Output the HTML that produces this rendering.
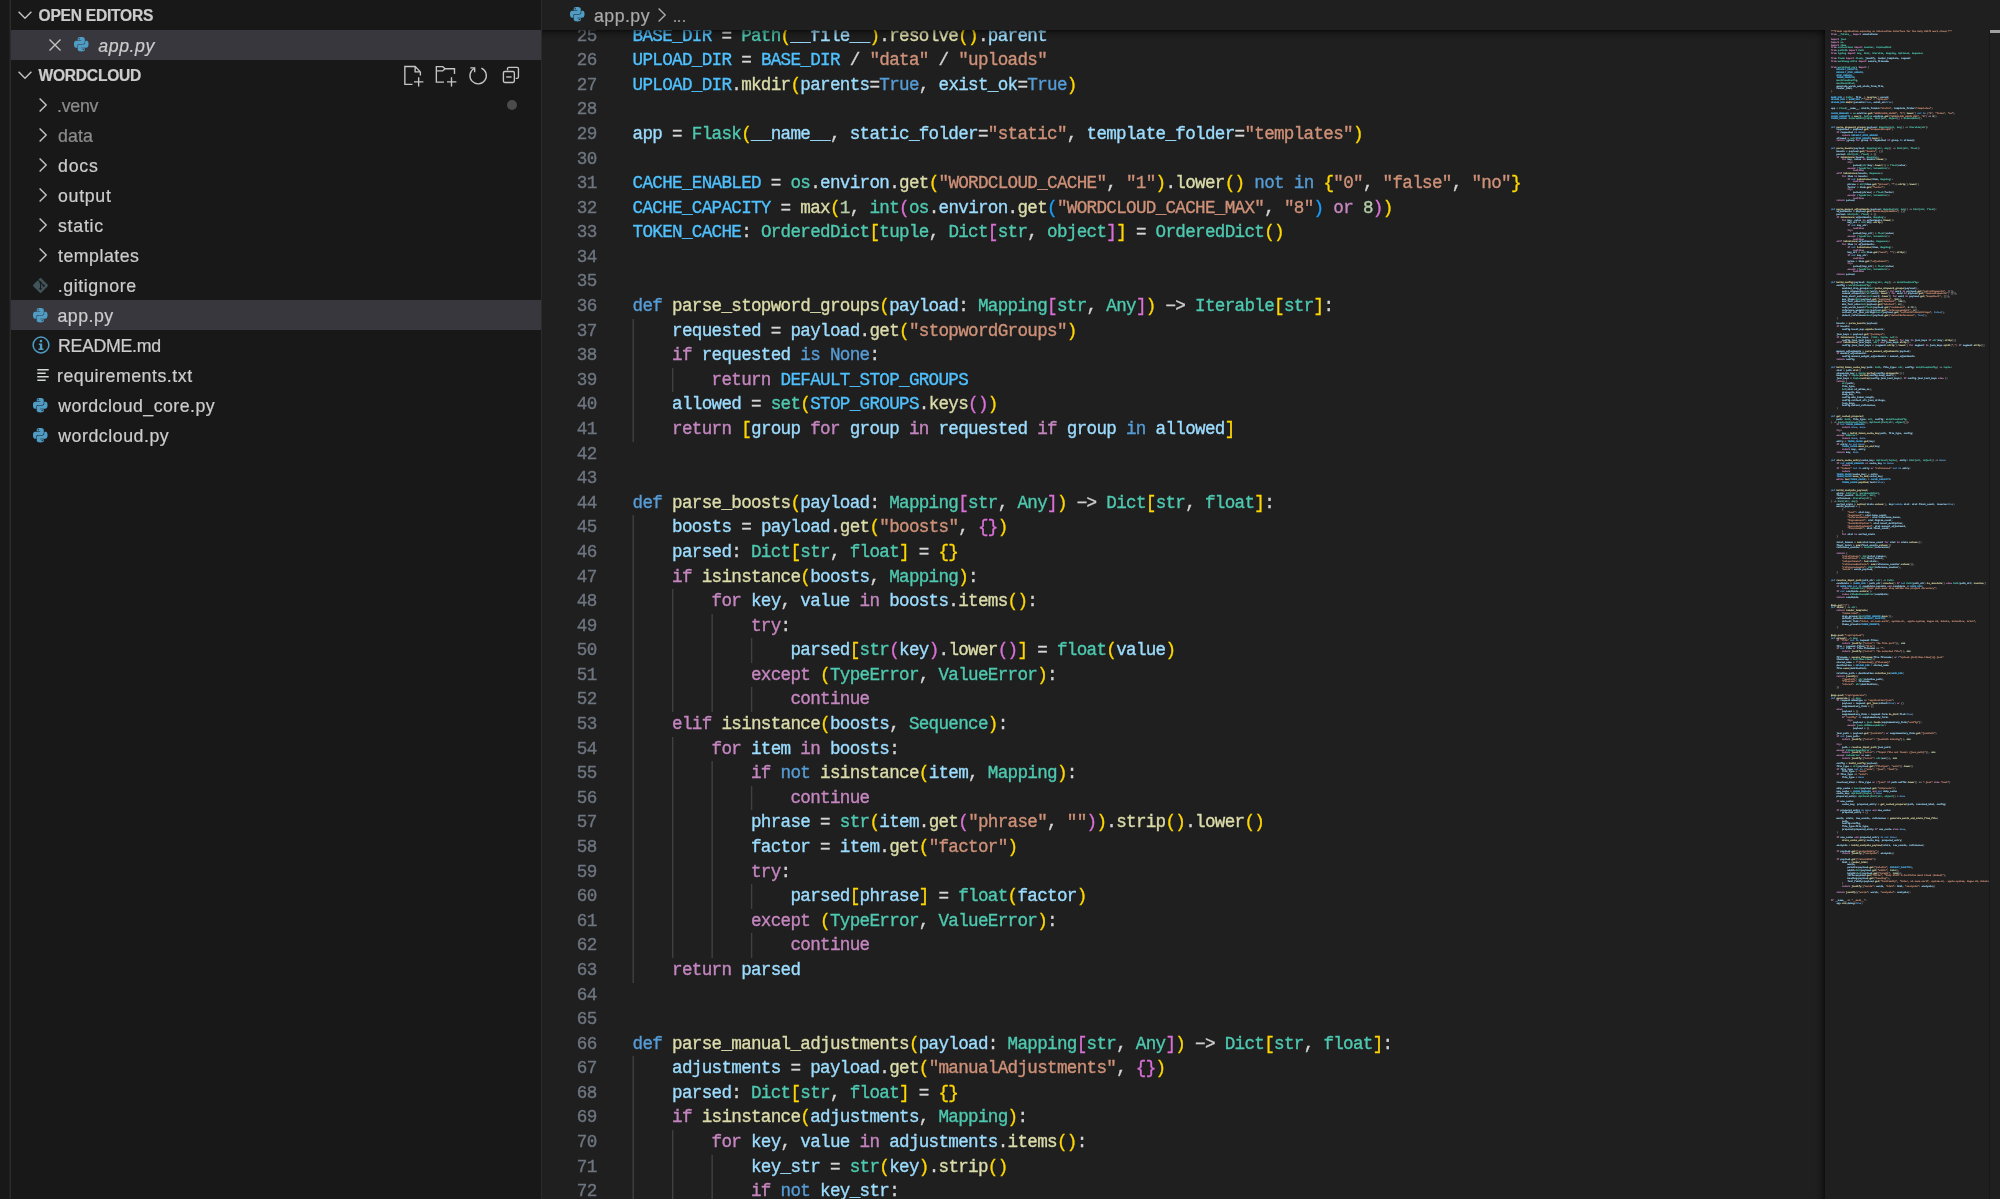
<!DOCTYPE html>
<html><head><meta charset="utf-8">
<style>
*{box-sizing:border-box}
html,body{margin:0;padding:0}
body{width:2000px;height:1199px;overflow:hidden;position:relative;background:#1f1f1f;font-family:"Liberation Sans",sans-serif;color:#cccccc}
i{font-style:normal}
#act{position:absolute;left:0;top:0;width:10px;height:1199px;background:#181818}
#actb{position:absolute;left:9px;top:0;width:2px;height:1199px;background:linear-gradient(to right,#212121 50%,#2b2b2b 50%)}
#side{will-change:transform;position:absolute;left:11px;top:0;width:530px;height:1199px;background:#181818;overflow:hidden}
#sideb{position:absolute;left:541px;top:0;width:1px;height:1199px;background:#2b2b2b}
.row{position:absolute;left:0;width:530px;height:30px;line-height:30px;font-size:17.76px;white-space:nowrap}
.row.sel{background:#37373d}
.row .t{position:absolute;left:46px;top:1px;-webkit-text-stroke:0.22px}
.hdr .t{left:27.5px;top:1px;font-weight:bold;font-size:15.6px;color:#cccccc;letter-spacing:-0.25px}
.dim .t{color:#8c8c8c}
svg{position:absolute;overflow:visible}
#ed{will-change:transform;position:absolute;left:542px;top:0;width:1458px;height:1199px;background:#1f1f1f;overflow:hidden}
#bc{-webkit-text-stroke:0.22px;position:absolute;left:0;top:0;width:1458px;height:30px;background:#1f1f1f;z-index:5;font-size:17.76px;line-height:30px;color:#a9a9a9;white-space:nowrap}
#bcsh{position:absolute;left:0;top:30px;width:1283px;height:10px;z-index:4;box-shadow:#000 0 8.2px 8.2px -8.2px inset}
.ln{position:absolute;left:0;width:1458px;height:24.587px;line-height:24.587px;white-space:pre;font-family:"Liberation Mono",monospace;font-size:17.6px;letter-spacing:-0.691px;color:#d4d4d4;-webkit-text-stroke:0.35px}
.no{position:absolute;left:0;width:54.5px;text-align:right;color:#6e7681;letter-spacing:-0.691px}
.tx{position:absolute;left:90.6px;top:0}
.g{position:absolute;width:1px}
.ctrl{color:#c586c0}.blue{color:#569cd6}.fn{color:#dcdcaa}.var{color:#9cdcfe}.const{color:#4fc1ff}.typ{color:#4ec9b0}.s{color:#ce9178}.n{color:#b5cea8}.p{color:#d4d4d4}.b0{color:#ffd700}.b1{color:#da70d6}.b2{color:#179fff}.cm{color:#6a9955}
#mm{position:absolute;left:1283px;top:30px;width:164px;height:1169px;background:#1f1f1f;z-index:3;overflow:hidden}
#mmsh{position:absolute;left:1273px;top:30px;width:10px;height:1169px;z-index:3;box-shadow:#000 -8.2px 0 8.2px -8.2px inset}
#mmw{position:absolute;left:0;top:0;width:164px;height:1169px}#mmc{opacity:.85;position:absolute;left:5.5px;top:0;transform-origin:0 0;text-rendering:geometricPrecision;transform:scale(0.1391,0.12500);font-family:"Liberation Mono",monospace;font-size:17.6px;letter-spacing:-0.691px;line-height:21.8576px;white-space:pre;color:#d4d4d4;-webkit-text-stroke:1.5px}
#mmc div{position:absolute;left:0;height:21.8576px}#mmc .b0,#mmc .b1,#mmc .b2{color:#8a8a8a}#mmc .p{color:#a0a0a0}
#sb{position:absolute;left:1447px;top:30px;width:11px;height:1169px;border-left:1px solid #17181a;z-index:3;background:#1f1f1f}
#sbm{position:absolute;left:1448px;top:30px;width:10px;height:2.5px;background:#a0a0a0;z-index:4}
</style></head><body>
<div id="act"></div><div id="actb"></div>
<div id="side">
<div class="row hdr" style="top:0"><span class="t">OPEN EDITORS</span></div>
<svg style="left:5.50px;top:10.20px" width="16" height="10" viewBox="-8 -5 16 10"><path d="M-6.4 -3.2L0 3.2L6.4 -3.2" fill="none" stroke="#c5c5c5" stroke-width="1.4"/></svg>
<div class="row sel" style="top:30px"><span class="t" style="left:87.3px;font-style:italic;letter-spacing:0.55px">app.py</span></div>
<svg style="left:36.60px;top:37.80px" width="14" height="14" viewBox="-7 -7 14 14"><path d="M-5.5 -5.5L5.5 5.5M5.5 -5.5L-5.5 5.5" fill="none" stroke="#c5c5c5" stroke-width="1.4"/></svg>
<svg style="left:63.35px;top:37.30px" width="14.50" height="14.40" viewBox="0 0 24 24" preserveAspectRatio="none"><path fill="#4f9cc4" d="M14.25.18l.9.2.73.26.59.3.45.32.34.34.25.34.16.33.1.3.04.26.02.2-.01.13V8.5l-.05.63-.13.55-.21.46-.26.38-.3.31-.33.25-.35.19-.35.14-.33.1-.3.07-.26.04-.21.02H8.77l-.69.05-.59.14-.5.22-.41.27-.33.32-.27.35-.2.36-.15.37-.1.35-.07.32-.04.27-.02.21v3.06H3.17l-.21-.03-.28-.07-.32-.12-.35-.18-.36-.26-.36-.36-.35-.46-.32-.59-.28-.73-.21-.88-.14-1.05-.05-1.23.06-1.22.16-1.04.24-.87.32-.71.36-.57.4-.44.42-.33.42-.24.4-.16.36-.1.32-.05.24-.01h.16l.06.01h8.16v-.83H6.18l-.01-2.75-.02-.37.05-.34.11-.31.17-.28.25-.26.31-.23.38-.2.44-.18.51-.15.58-.12.64-.1.71-.06.77-.04.84-.02 1.27.05zm-6.3 1.98l-.23.33-.08.41.08.41.23.34.33.22.41.09.41-.09.33-.22.23-.34.08-.41-.08-.41-.23-.33-.33-.22-.41-.09-.41.09zm13.09 3.95l.28.06.32.12.35.18.36.27.36.35.35.47.32.59.28.73.21.88.14 1.04.05 1.23-.06 1.23-.16 1.04-.24.86-.32.71-.36.57-.4.45-.42.33-.42.24-.4.16-.36.09-.32.05-.24.02-.16-.01h-8.22v.82h5.84l.01 2.76.02.36-.05.34-.11.31-.17.29-.25.25-.31.24-.38.2-.44.17-.51.15-.58.13-.64.09-.71.07-.77.04-.84.01-1.27-.04-1.07-.14-.9-.2-.73-.25-.59-.3-.45-.33-.34-.34-.25-.34-.16-.33-.1-.3-.04-.25-.02-.2.01-.13v-5.34l.05-.64.13-.54.21-.46.26-.38.3-.32.33-.24.35-.2.35-.14.33-.1.3-.06.26-.04.21-.02.13-.01h5.84l.69-.05.59-.14.5-.21.41-.28.33-.32.27-.35.2-.36.15-.36.1-.35.07-.32.04-.28.02-.21V6.07h2.09l.14.01zm-6.47 14.25l-.23.33-.08.41.08.41.23.33.33.23.41.08.41-.08.33-.23.23-.33.08-.41-.08-.41-.23-.33-.33-.23-.41-.08-.41.08z"/></svg>
<div class="row hdr" style="top:60px"><span class="t">WORDCLOUD</span></div>
<svg style="left:5.50px;top:70.20px" width="16" height="10" viewBox="-8 -5 16 10"><path d="M-6.4 -3.2L0 3.2L6.4 -3.2" fill="none" stroke="#c5c5c5" stroke-width="1.4"/></svg>
<svg style="left:0;top:0" width="530" height="100" viewBox="0 0 530 100"><g fill="none" stroke="#c5c5c5" stroke-width="1.37"><path d="M401.50 84.40 L393.85 84.40 L393.85 66.48 L404.13 66.48 L409.38 71.88 M404.13 66.48 L404.13 71.88 L409.38 71.88 M409.38 71.65 L409.38 75.40 M403.00 81.85 L412.38 81.85 M407.65 77.13 L407.65 86.50"/><path d="M433.00 82.15 L425.35 82.15 L425.35 66.63 L431.73 66.63 L434.13 68.73 L443.50 68.73 L443.50 73.90 M425.35 70.90 L431.73 70.90 L434.13 68.73 M436.00 81.85 L445.38 81.85 M440.50 77.13 L440.50 86.50"/></g></svg>
<svg style="left:456.27px;top:64.47px" width="21.86" height="21.86" viewBox="0 0 16 16"><g fill="none" stroke="#c5c5c5" stroke-width="1"><path d="M5.2 3.3A6 6 0 1 0 10.5 3"/><path d="M2.4 2.8H5.6V6"/></g></svg>
<svg style="left:489.07px;top:64.47px" width="21.86" height="21.86" viewBox="0 0 16 16"><g fill="none" stroke="#c5c5c5" stroke-width="1"><path d="M5.5 4.5V3.5Q5.5 2.5 6.5 2.5H12.5Q13.5 2.5 13.5 3.5V9.5Q13.5 10.5 12.5 10.5H11.5"/><rect x="2.5" y="5.5" width="8" height="8" rx="1"/><path d="M4.5 9.5H8.5"/></g></svg>
<div class="row dim" style="top:90px"><span class="t" style="left:46.00px;letter-spacing:-0.250px">.venv</span></div>
<svg style="left:26.70px;top:97.00px" width="10" height="16" viewBox="-5 -8 10 16"><path d="M-3.4 -6.6L3.2 0L-3.4 6.6" fill="none" stroke="#c5c5c5" stroke-width="1.4"/></svg>
<div class="row dim" style="top:120px"><span class="t" style="left:47.00px;letter-spacing:0.100px">data</span></div>
<svg style="left:26.70px;top:127.00px" width="10" height="16" viewBox="-5 -8 10 16"><path d="M-3.4 -6.6L3.2 0L-3.4 6.6" fill="none" stroke="#c5c5c5" stroke-width="1.4"/></svg>
<div class="row" style="top:150px"><span class="t" style="left:47.00px;letter-spacing:0.770px">docs</span></div>
<svg style="left:26.70px;top:157.00px" width="10" height="16" viewBox="-5 -8 10 16"><path d="M-3.4 -6.6L3.2 0L-3.4 6.6" fill="none" stroke="#c5c5c5" stroke-width="1.4"/></svg>
<div class="row" style="top:180px"><span class="t" style="left:47.00px;letter-spacing:0.700px">output</span></div>
<svg style="left:26.70px;top:187.00px" width="10" height="16" viewBox="-5 -8 10 16"><path d="M-3.4 -6.6L3.2 0L-3.4 6.6" fill="none" stroke="#c5c5c5" stroke-width="1.4"/></svg>
<div class="row" style="top:210px"><span class="t" style="left:47.00px;letter-spacing:0.740px">static</span></div>
<svg style="left:26.70px;top:217.00px" width="10" height="16" viewBox="-5 -8 10 16"><path d="M-3.4 -6.6L3.2 0L-3.4 6.6" fill="none" stroke="#c5c5c5" stroke-width="1.4"/></svg>
<div class="row" style="top:240px"><span class="t" style="left:47.00px;letter-spacing:0.500px">templates</span></div>
<svg style="left:26.70px;top:247.00px" width="10" height="16" viewBox="-5 -8 10 16"><path d="M-3.4 -6.6L3.2 0L-3.4 6.6" fill="none" stroke="#c5c5c5" stroke-width="1.4"/></svg>
<div class="row" style="top:270px"><span class="t" style="left:46.80px;letter-spacing:0.578px">.gitignore</span></div>
<svg style="left:21.90px;top:277.50px" width="15.00" height="15.00" viewBox="0 0 24 24"><path fill="#41535b" d="M23.546 10.93L13.067.452c-.604-.603-1.582-.603-2.188 0L8.708 2.627l2.76 2.76c.645-.215 1.379-.07 1.889.441.516.515.658 1.258.438 1.9l2.658 2.66c.645-.223 1.387-.078 1.9.435.721.72.721 1.884 0 2.604-.719.719-1.881.719-2.6 0-.539-.541-.674-1.337-.404-1.996L12.86 8.955v6.525c.176.086.342.203.488.348.713.721.713 1.883 0 2.6-.719.721-1.889.721-2.609 0-.719-.719-.719-1.879 0-2.598.182-.18.387-.316.605-.406V8.835c-.217-.091-.424-.222-.6-.401-.545-.545-.676-1.342-.396-2.009L7.636 3.7.45 10.881c-.6.605-.6 1.584 0 2.189l10.48 10.477c.604.604 1.582.604 2.186 0l10.43-10.43c.605-.603.605-1.582 0-2.187"/></svg>
<div class="row sel" style="top:300px"><span class="t" style="left:46.40px;letter-spacing:0.500px">app.py</span></div>
<svg style="left:22.35px;top:307.80px" width="14.50" height="14.40" viewBox="0 0 24 24" preserveAspectRatio="none"><path fill="#4f9cc4" d="M14.25.18l.9.2.73.26.59.3.45.32.34.34.25.34.16.33.1.3.04.26.02.2-.01.13V8.5l-.05.63-.13.55-.21.46-.26.38-.3.31-.33.25-.35.19-.35.14-.33.1-.3.07-.26.04-.21.02H8.77l-.69.05-.59.14-.5.22-.41.27-.33.32-.27.35-.2.36-.15.37-.1.35-.07.32-.04.27-.02.21v3.06H3.17l-.21-.03-.28-.07-.32-.12-.35-.18-.36-.26-.36-.36-.35-.46-.32-.59-.28-.73-.21-.88-.14-1.05-.05-1.23.06-1.22.16-1.04.24-.87.32-.71.36-.57.4-.44.42-.33.42-.24.4-.16.36-.1.32-.05.24-.01h.16l.06.01h8.16v-.83H6.18l-.01-2.75-.02-.37.05-.34.11-.31.17-.28.25-.26.31-.23.38-.2.44-.18.51-.15.58-.12.64-.1.71-.06.77-.04.84-.02 1.27.05zm-6.3 1.98l-.23.33-.08.41.08.41.23.34.33.22.41.09.41-.09.33-.22.23-.34.08-.41-.08-.41-.23-.33-.33-.22-.41-.09-.41.09zm13.09 3.95l.28.06.32.12.35.18.36.27.36.35.35.47.32.59.28.73.21.88.14 1.04.05 1.23-.06 1.23-.16 1.04-.24.86-.32.71-.36.57-.4.45-.42.33-.42.24-.4.16-.36.09-.32.05-.24.02-.16-.01h-8.22v.82h5.84l.01 2.76.02.36-.05.34-.11.31-.17.29-.25.25-.31.24-.38.2-.44.17-.51.15-.58.13-.64.09-.71.07-.77.04-.84.01-1.27-.04-1.07-.14-.9-.2-.73-.25-.59-.3-.45-.33-.34-.34-.25-.34-.16-.33-.1-.3-.04-.25-.02-.2.01-.13v-5.34l.05-.64.13-.54.21-.46.26-.38.3-.32.33-.24.35-.2.35-.14.33-.1.3-.06.26-.04.21-.02.13-.01h5.84l.69-.05.59-.14.5-.21.41-.28.33-.32.27-.35.2-.36.15-.36.1-.35.07-.32.04-.28.02-.21V6.07h2.09l.14.01zm-6.47 14.25l-.23.33-.08.41.08.41.23.33.33.23.41.08.41-.08.33-.23.23-.33.08-.41-.08-.41-.23-.33-.33-.23-.41-.08-.41.08z"/></svg>
<div class="row" style="top:330px"><span class="t" style="left:47.00px;letter-spacing:-0.310px">README.md</span></div>
<svg style="left:19.60px;top:335.20px" width="20" height="20" viewBox="-10 -10 20 20"><circle r="7.9" fill="none" stroke="#4f9cc4" stroke-width="1.5"/><circle cx="0" cy="-3.9" r="1.35" fill="#4f9cc4"/><path fill="#4f9cc4" d="M-2.2 -1.6h3.4v5.0h1.3v1.5h-5v-1.5h1.4v-3.5h-1.1z"/></svg>
<div class="row" style="top:360px"><span class="t" style="left:46.00px;letter-spacing:0.520px">requirements.txt</span></div>
<svg style="left:25.20px;top:368.20px" width="14" height="14" viewBox="-7 -7 14 14"><g stroke="#d4d7d6" stroke-width="1.5"><path d="M-5.7 -5.2h11.4M-5.7 -1.7h8.4M-5.7 1.8h11.4M-5.7 5.3h8.4"/></g></svg>
<div class="row" style="top:390px"><span class="t" style="left:47.20px;letter-spacing:0.470px">wordcloud_core.py</span></div>
<svg style="left:22.35px;top:397.80px" width="14.50" height="14.40" viewBox="0 0 24 24" preserveAspectRatio="none"><path fill="#4f9cc4" d="M14.25.18l.9.2.73.26.59.3.45.32.34.34.25.34.16.33.1.3.04.26.02.2-.01.13V8.5l-.05.63-.13.55-.21.46-.26.38-.3.31-.33.25-.35.19-.35.14-.33.1-.3.07-.26.04-.21.02H8.77l-.69.05-.59.14-.5.22-.41.27-.33.32-.27.35-.2.36-.15.37-.1.35-.07.32-.04.27-.02.21v3.06H3.17l-.21-.03-.28-.07-.32-.12-.35-.18-.36-.26-.36-.36-.35-.46-.32-.59-.28-.73-.21-.88-.14-1.05-.05-1.23.06-1.22.16-1.04.24-.87.32-.71.36-.57.4-.44.42-.33.42-.24.4-.16.36-.1.32-.05.24-.01h.16l.06.01h8.16v-.83H6.18l-.01-2.75-.02-.37.05-.34.11-.31.17-.28.25-.26.31-.23.38-.2.44-.18.51-.15.58-.12.64-.1.71-.06.77-.04.84-.02 1.27.05zm-6.3 1.98l-.23.33-.08.41.08.41.23.34.33.22.41.09.41-.09.33-.22.23-.34.08-.41-.08-.41-.23-.33-.33-.22-.41-.09-.41.09zm13.09 3.95l.28.06.32.12.35.18.36.27.36.35.35.47.32.59.28.73.21.88.14 1.04.05 1.23-.06 1.23-.16 1.04-.24.86-.32.71-.36.57-.4.45-.42.33-.42.24-.4.16-.36.09-.32.05-.24.02-.16-.01h-8.22v.82h5.84l.01 2.76.02.36-.05.34-.11.31-.17.29-.25.25-.31.24-.38.2-.44.17-.51.15-.58.13-.64.09-.71.07-.77.04-.84.01-1.27-.04-1.07-.14-.9-.2-.73-.25-.59-.3-.45-.33-.34-.34-.25-.34-.16-.33-.1-.3-.04-.25-.02-.2.01-.13v-5.34l.05-.64.13-.54.21-.46.26-.38.3-.32.33-.24.35-.2.35-.14.33-.1.3-.06.26-.04.21-.02.13-.01h5.84l.69-.05.59-.14.5-.21.41-.28.33-.32.27-.35.2-.36.15-.36.1-.35.07-.32.04-.28.02-.21V6.07h2.09l.14.01zm-6.47 14.25l-.23.33-.08.41.08.41.23.33.33.23.41.08.41-.08.33-.23.23-.33.08-.41-.08-.41-.23-.33-.33-.23-.41-.08-.41.08z"/></svg>
<div class="row" style="top:420px"><span class="t" style="left:47.20px;letter-spacing:0.540px">wordcloud.py</span></div>
<svg style="left:22.35px;top:427.80px" width="14.50" height="14.40" viewBox="0 0 24 24" preserveAspectRatio="none"><path fill="#4f9cc4" d="M14.25.18l.9.2.73.26.59.3.45.32.34.34.25.34.16.33.1.3.04.26.02.2-.01.13V8.5l-.05.63-.13.55-.21.46-.26.38-.3.31-.33.25-.35.19-.35.14-.33.1-.3.07-.26.04-.21.02H8.77l-.69.05-.59.14-.5.22-.41.27-.33.32-.27.35-.2.36-.15.37-.1.35-.07.32-.04.27-.02.21v3.06H3.17l-.21-.03-.28-.07-.32-.12-.35-.18-.36-.26-.36-.36-.35-.46-.32-.59-.28-.73-.21-.88-.14-1.05-.05-1.23.06-1.22.16-1.04.24-.87.32-.71.36-.57.4-.44.42-.33.42-.24.4-.16.36-.1.32-.05.24-.01h.16l.06.01h8.16v-.83H6.18l-.01-2.75-.02-.37.05-.34.11-.31.17-.28.25-.26.31-.23.38-.2.44-.18.51-.15.58-.12.64-.1.71-.06.77-.04.84-.02 1.27.05zm-6.3 1.98l-.23.33-.08.41.08.41.23.34.33.22.41.09.41-.09.33-.22.23-.34.08-.41-.08-.41-.23-.33-.33-.22-.41-.09-.41.09zm13.09 3.95l.28.06.32.12.35.18.36.27.36.35.35.47.32.59.28.73.21.88.14 1.04.05 1.23-.06 1.23-.16 1.04-.24.86-.32.71-.36.57-.4.45-.42.33-.42.24-.4.16-.36.09-.32.05-.24.02-.16-.01h-8.22v.82h5.84l.01 2.76.02.36-.05.34-.11.31-.17.29-.25.25-.31.24-.38.2-.44.17-.51.15-.58.13-.64.09-.71.07-.77.04-.84.01-1.27-.04-1.07-.14-.9-.2-.73-.25-.59-.3-.45-.33-.34-.34-.25-.34-.16-.33-.1-.3-.04-.25-.02-.2.01-.13v-5.34l.05-.64.13-.54.21-.46.26-.38.3-.32.33-.24.35-.2.35-.14.33-.1.3-.06.26-.04.21-.02.13-.01h5.84l.69-.05.59-.14.5-.21.41-.28.33-.32.27-.35.2-.36.15-.36.1-.35.07-.32.04-.28.02-.21V6.07h2.09l.14.01zm-6.47 14.25l-.23.33-.08.41.08.41.23.33.33.23.41.08.41-.08.33-.23.23-.33.08-.41-.08-.41-.23-.33-.33-.23-.41-.08-.41.08z"/></svg>
<div style="position:absolute;left:496.3px;top:100px;width:10px;height:10px;border-radius:5px;background:#4b4b4b"></div>
</div><div id="sideb"></div>
<div id="ed">
<div id="bc"><svg style="left:28.15px;top:7.20px" width="14.50" height="14.40" viewBox="0 0 24 24" preserveAspectRatio="none"><path fill="#4f9cc4" d="M14.25.18l.9.2.73.26.59.3.45.32.34.34.25.34.16.33.1.3.04.26.02.2-.01.13V8.5l-.05.63-.13.55-.21.46-.26.38-.3.31-.33.25-.35.19-.35.14-.33.1-.3.07-.26.04-.21.02H8.77l-.69.05-.59.14-.5.22-.41.27-.33.32-.27.35-.2.36-.15.37-.1.35-.07.32-.04.27-.02.21v3.06H3.17l-.21-.03-.28-.07-.32-.12-.35-.18-.36-.26-.36-.36-.35-.46-.32-.59-.28-.73-.21-.88-.14-1.05-.05-1.23.06-1.22.16-1.04.24-.87.32-.71.36-.57.4-.44.42-.33.42-.24.4-.16.36-.1.32-.05.24-.01h.16l.06.01h8.16v-.83H6.18l-.01-2.75-.02-.37.05-.34.11-.31.17-.28.25-.26.31-.23.38-.2.44-.18.51-.15.58-.12.64-.1.71-.06.77-.04.84-.02 1.27.05zm-6.3 1.98l-.23.33-.08.41.08.41.23.34.33.22.41.09.41-.09.33-.22.23-.34.08-.41-.08-.41-.23-.33-.33-.22-.41-.09-.41.09zm13.09 3.95l.28.06.32.12.35.18.36.27.36.35.35.47.32.59.28.73.21.88.14 1.04.05 1.23-.06 1.23-.16 1.04-.24.86-.32.71-.36.57-.4.45-.42.33-.42.24-.4.16-.36.09-.32.05-.24.02-.16-.01h-8.22v.82h5.84l.01 2.76.02.36-.05.34-.11.31-.17.29-.25.25-.31.24-.38.2-.44.17-.51.15-.58.13-.64.09-.71.07-.77.04-.84.01-1.27-.04-1.07-.14-.9-.2-.73-.25-.59-.3-.45-.33-.34-.34-.25-.34-.16-.33-.1-.3-.04-.25-.02-.2.01-.13v-5.34l.05-.64.13-.54.21-.46.26-.38.3-.32.33-.24.35-.2.35-.14.33-.1.3-.06.26-.04.21-.02.13-.01h5.84l.69-.05.59-.14.5-.21.41-.28.33-.32.27-.35.2-.36.15-.36.1-.35.07-.32.04-.28.02-.21V6.07h2.09l.14.01zm-6.47 14.25l-.23.33-.08.41.08.41.23.33.33.23.41.08.41-.08.33-.23.23-.33.08-.41-.08-.41-.23-.33-.33-.23-.41-.08-.41.08z"/></svg><span style="position:absolute;left:52.0px;top:1px;letter-spacing:0.45px">app.py</span><svg style="left:114.90px;top:7.00px" width="10" height="16" viewBox="-5 -8 10 16"><path d="M-3.4 -6.6L3.2 0L-3.4 6.6" fill="none" stroke="#a9a9a9" stroke-width="1.4"/></svg><b style="position:absolute;left:131.60px;top:19.5px;width:2.4px;height:2.4px;border-radius:1.2px;background:#a9a9a9"></b><b style="position:absolute;left:136.10px;top:19.5px;width:2.4px;height:2.4px;border-radius:1.2px;background:#a9a9a9"></b><b style="position:absolute;left:140.60px;top:19.5px;width:2.4px;height:2.4px;border-radius:1.2px;background:#a9a9a9"></b></div>
<div id="bcsh"></div>
<div class="ln" style="top:23.61px"><span class="no">25</span><span class="tx"><i class="const">BASE_DIR </i><i class="p">= </i><i class="typ">Path</i><i class="b0">(</i><i class="var">__file__</i><i class="b0">)</i><i class="p">.</i><i class="fn">resolve</i><i class="b0">()</i><i class="p">.</i><i class="var">parent</i></span></div>
<div class="ln" style="top:48.20px"><span class="no">26</span><span class="tx"><i class="const">UPLOAD_DIR </i><i class="p">= </i><i class="const">BASE_DIR </i><i class="p">/ </i><i class="s">"data" </i><i class="p">/ </i><i class="s">"uploads"</i></span></div>
<div class="ln" style="top:72.79px"><span class="no">27</span><span class="tx"><i class="const">UPLOAD_DIR</i><i class="p">.</i><i class="fn">mkdir</i><i class="b0">(</i><i class="var">parents</i><i class="p">=</i><i class="blue">True</i><i class="p">, </i><i class="var">exist_ok</i><i class="p">=</i><i class="blue">True</i><i class="b0">)</i></span></div>
<div class="ln" style="top:97.37px"><span class="no">28</span><span class="tx"></span></div>
<div class="ln" style="top:121.96px"><span class="no">29</span><span class="tx"><i class="var">app </i><i class="p">= </i><i class="typ">Flask</i><i class="b0">(</i><i class="var">__name__</i><i class="p">, </i><i class="var">static_folder</i><i class="p">=</i><i class="s">"static"</i><i class="p">, </i><i class="var">template_folder</i><i class="p">=</i><i class="s">"templates"</i><i class="b0">)</i></span></div>
<div class="ln" style="top:146.55px"><span class="no">30</span><span class="tx"></span></div>
<div class="ln" style="top:171.13px"><span class="no">31</span><span class="tx"><i class="const">CACHE_ENABLED </i><i class="p">= </i><i class="typ">os</i><i class="p">.</i><i class="var">environ</i><i class="p">.</i><i class="fn">get</i><i class="b0">(</i><i class="s">"WORDCLOUD_CACHE"</i><i class="p">, </i><i class="s">"1"</i><i class="b0">)</i><i class="p">.</i><i class="fn">lower</i><i class="b0">() </i><i class="blue">not in </i><i class="b0">{</i><i class="s">"0"</i><i class="p">, </i><i class="s">"false"</i><i class="p">, </i><i class="s">"no"</i><i class="b0">}</i></span></div>
<div class="ln" style="top:195.72px"><span class="no">32</span><span class="tx"><i class="const">CACHE_CAPACITY </i><i class="p">= </i><i class="fn">max</i><i class="b0">(</i><i class="n">1</i><i class="p">, </i><i class="typ">int</i><i class="b1">(</i><i class="typ">os</i><i class="p">.</i><i class="var">environ</i><i class="p">.</i><i class="fn">get</i><i class="b2">(</i><i class="s">"WORDCLOUD_CACHE_MAX"</i><i class="p">, </i><i class="s">"8"</i><i class="b2">) </i><i class="ctrl">or </i><i class="n">8</i><i class="b1">)</i><i class="b0">)</i></span></div>
<div class="ln" style="top:220.31px"><span class="no">33</span><span class="tx"><i class="const">TOKEN_CACHE</i><i class="p">: </i><i class="typ">OrderedDict</i><i class="b0">[</i><i class="typ">tuple</i><i class="p">, </i><i class="typ">Dict</i><i class="b1">[</i><i class="typ">str</i><i class="p">, </i><i class="typ">object</i><i class="b1">]</i><i class="b0">] </i><i class="p">= </i><i class="typ">OrderedDict</i><i class="b0">()</i></span></div>
<div class="ln" style="top:244.90px"><span class="no">34</span><span class="tx"></span></div>
<div class="ln" style="top:269.48px"><span class="no">35</span><span class="tx"></span></div>
<div class="ln" style="top:294.07px"><span class="no">36</span><span class="tx"><i class="blue">def </i><i class="fn">parse_stopword_groups</i><i class="b0">(</i><i class="var">payload</i><i class="p">: </i><i class="typ">Mapping</i><i class="b1">[</i><i class="typ">str</i><i class="p">, </i><i class="typ">Any</i><i class="b1">]</i><i class="b0">) </i><i class="p">−&gt; </i><i class="typ">Iterable</i><i class="b0">[</i><i class="typ">str</i><i class="b0">]</i><i class="p">:</i></span></div>
<div class="ln" style="top:318.66px"><span class="no">37</span><span class="tx">    <i class="var">requested </i><i class="p">= </i><i class="var">payload</i><i class="p">.</i><i class="fn">get</i><i class="b0">(</i><i class="s">"stopwordGroups"</i><i class="b0">)</i></span></div>
<div class="ln" style="top:343.24px"><span class="no">38</span><span class="tx">    <i class="ctrl">if </i><i class="var">requested </i><i class="blue">is None</i><i class="p">:</i></span></div>
<div class="ln" style="top:367.83px"><span class="no">39</span><span class="tx">        <i class="ctrl">return </i><i class="const">DEFAULT_STOP_GROUPS</i></span></div>
<div class="ln" style="top:392.42px"><span class="no">40</span><span class="tx">    <i class="var">allowed </i><i class="p">= </i><i class="typ">set</i><i class="b0">(</i><i class="const">STOP_GROUPS</i><i class="p">.</i><i class="fn">keys</i><i class="b1">()</i><i class="b0">)</i></span></div>
<div class="ln" style="top:417.00px"><span class="no">41</span><span class="tx">    <i class="ctrl">return </i><i class="b0">[</i><i class="var">group </i><i class="ctrl">for </i><i class="var">group </i><i class="ctrl">in </i><i class="var">requested </i><i class="ctrl">if </i><i class="var">group </i><i class="blue">in </i><i class="var">allowed</i><i class="b0">]</i></span></div>
<div class="ln" style="top:441.59px"><span class="no">42</span><span class="tx"></span></div>
<div class="ln" style="top:466.18px"><span class="no">43</span><span class="tx"></span></div>
<div class="ln" style="top:490.77px"><span class="no">44</span><span class="tx"><i class="blue">def </i><i class="fn">parse_boosts</i><i class="b0">(</i><i class="var">payload</i><i class="p">: </i><i class="typ">Mapping</i><i class="b1">[</i><i class="typ">str</i><i class="p">, </i><i class="typ">Any</i><i class="b1">]</i><i class="b0">) </i><i class="p">−&gt; </i><i class="typ">Dict</i><i class="b0">[</i><i class="typ">str</i><i class="p">, </i><i class="typ">float</i><i class="b0">]</i><i class="p">:</i></span></div>
<div class="ln" style="top:515.35px"><span class="no">45</span><span class="tx">    <i class="var">boosts </i><i class="p">= </i><i class="var">payload</i><i class="p">.</i><i class="fn">get</i><i class="b0">(</i><i class="s">"boosts"</i><i class="p">, </i><i class="b1">{}</i><i class="b0">)</i></span></div>
<div class="ln" style="top:539.94px"><span class="no">46</span><span class="tx">    <i class="var">parsed</i><i class="p">: </i><i class="typ">Dict</i><i class="b0">[</i><i class="typ">str</i><i class="p">, </i><i class="typ">float</i><i class="b0">] </i><i class="p">= </i><i class="b0">{}</i></span></div>
<div class="ln" style="top:564.53px"><span class="no">47</span><span class="tx">    <i class="ctrl">if </i><i class="fn">isinstance</i><i class="b0">(</i><i class="var">boosts</i><i class="p">, </i><i class="typ">Mapping</i><i class="b0">)</i><i class="p">:</i></span></div>
<div class="ln" style="top:589.11px"><span class="no">48</span><span class="tx">        <i class="ctrl">for </i><i class="var">key</i><i class="p">, </i><i class="var">value </i><i class="ctrl">in </i><i class="var">boosts</i><i class="p">.</i><i class="fn">items</i><i class="b0">()</i><i class="p">:</i></span></div>
<div class="ln" style="top:613.70px"><span class="no">49</span><span class="tx">            <i class="ctrl">try</i><i class="p">:</i></span></div>
<div class="ln" style="top:638.29px"><span class="no">50</span><span class="tx">                <i class="var">parsed</i><i class="b0">[</i><i class="typ">str</i><i class="b1">(</i><i class="var">key</i><i class="b1">)</i><i class="p">.</i><i class="fn">lower</i><i class="b1">()</i><i class="b0">] </i><i class="p">= </i><i class="typ">float</i><i class="b0">(</i><i class="var">value</i><i class="b0">)</i></span></div>
<div class="ln" style="top:662.88px"><span class="no">51</span><span class="tx">            <i class="ctrl">except </i><i class="b0">(</i><i class="typ">TypeError</i><i class="p">, </i><i class="typ">ValueError</i><i class="b0">)</i><i class="p">:</i></span></div>
<div class="ln" style="top:687.46px"><span class="no">52</span><span class="tx">                <i class="ctrl">continue</i></span></div>
<div class="ln" style="top:712.05px"><span class="no">53</span><span class="tx">    <i class="ctrl">elif </i><i class="fn">isinstance</i><i class="b0">(</i><i class="var">boosts</i><i class="p">, </i><i class="typ">Sequence</i><i class="b0">)</i><i class="p">:</i></span></div>
<div class="ln" style="top:736.64px"><span class="no">54</span><span class="tx">        <i class="ctrl">for </i><i class="var">item </i><i class="ctrl">in </i><i class="var">boosts</i><i class="p">:</i></span></div>
<div class="ln" style="top:761.22px"><span class="no">55</span><span class="tx">            <i class="ctrl">if </i><i class="blue">not </i><i class="fn">isinstance</i><i class="b0">(</i><i class="var">item</i><i class="p">, </i><i class="typ">Mapping</i><i class="b0">)</i><i class="p">:</i></span></div>
<div class="ln" style="top:785.81px"><span class="no">56</span><span class="tx">                <i class="ctrl">continue</i></span></div>
<div class="ln" style="top:810.40px"><span class="no">57</span><span class="tx">            <i class="var">phrase </i><i class="p">= </i><i class="typ">str</i><i class="b0">(</i><i class="var">item</i><i class="p">.</i><i class="fn">get</i><i class="b1">(</i><i class="s">"phrase"</i><i class="p">, </i><i class="s">""</i><i class="b1">)</i><i class="b0">)</i><i class="p">.</i><i class="fn">strip</i><i class="b0">()</i><i class="p">.</i><i class="fn">lower</i><i class="b0">()</i></span></div>
<div class="ln" style="top:834.98px"><span class="no">58</span><span class="tx">            <i class="var">factor </i><i class="p">= </i><i class="var">item</i><i class="p">.</i><i class="fn">get</i><i class="b0">(</i><i class="s">"factor"</i><i class="b0">)</i></span></div>
<div class="ln" style="top:859.57px"><span class="no">59</span><span class="tx">            <i class="ctrl">try</i><i class="p">:</i></span></div>
<div class="ln" style="top:884.16px"><span class="no">60</span><span class="tx">                <i class="var">parsed</i><i class="b0">[</i><i class="var">phrase</i><i class="b0">] </i><i class="p">= </i><i class="typ">float</i><i class="b0">(</i><i class="var">factor</i><i class="b0">)</i></span></div>
<div class="ln" style="top:908.75px"><span class="no">61</span><span class="tx">            <i class="ctrl">except </i><i class="b0">(</i><i class="typ">TypeError</i><i class="p">, </i><i class="typ">ValueError</i><i class="b0">)</i><i class="p">:</i></span></div>
<div class="ln" style="top:933.33px"><span class="no">62</span><span class="tx">                <i class="ctrl">continue</i></span></div>
<div class="ln" style="top:957.92px"><span class="no">63</span><span class="tx">    <i class="ctrl">return </i><i class="var">parsed</i></span></div>
<div class="ln" style="top:982.51px"><span class="no">64</span><span class="tx"></span></div>
<div class="ln" style="top:1007.09px"><span class="no">65</span><span class="tx"></span></div>
<div class="ln" style="top:1031.68px"><span class="no">66</span><span class="tx"><i class="blue">def </i><i class="fn">parse_manual_adjustments</i><i class="b0">(</i><i class="var">payload</i><i class="p">: </i><i class="typ">Mapping</i><i class="b1">[</i><i class="typ">str</i><i class="p">, </i><i class="typ">Any</i><i class="b1">]</i><i class="b0">) </i><i class="p">−&gt; </i><i class="typ">Dict</i><i class="b0">[</i><i class="typ">str</i><i class="p">, </i><i class="typ">float</i><i class="b0">]</i><i class="p">:</i></span></div>
<div class="ln" style="top:1056.27px"><span class="no">67</span><span class="tx">    <i class="var">adjustments </i><i class="p">= </i><i class="var">payload</i><i class="p">.</i><i class="fn">get</i><i class="b0">(</i><i class="s">"manualAdjustments"</i><i class="p">, </i><i class="b1">{}</i><i class="b0">)</i></span></div>
<div class="ln" style="top:1080.85px"><span class="no">68</span><span class="tx">    <i class="var">parsed</i><i class="p">: </i><i class="typ">Dict</i><i class="b0">[</i><i class="typ">str</i><i class="p">, </i><i class="typ">float</i><i class="b0">] </i><i class="p">= </i><i class="b0">{}</i></span></div>
<div class="ln" style="top:1105.44px"><span class="no">69</span><span class="tx">    <i class="ctrl">if </i><i class="fn">isinstance</i><i class="b0">(</i><i class="var">adjustments</i><i class="p">, </i><i class="typ">Mapping</i><i class="b0">)</i><i class="p">:</i></span></div>
<div class="ln" style="top:1130.03px"><span class="no">70</span><span class="tx">        <i class="ctrl">for </i><i class="var">key</i><i class="p">, </i><i class="var">value </i><i class="ctrl">in </i><i class="var">adjustments</i><i class="p">.</i><i class="fn">items</i><i class="b0">()</i><i class="p">:</i></span></div>
<div class="ln" style="top:1154.62px"><span class="no">71</span><span class="tx">            <i class="var">key_str </i><i class="p">= </i><i class="typ">str</i><i class="b0">(</i><i class="var">key</i><i class="b0">)</i><i class="p">.</i><i class="fn">strip</i><i class="b0">()</i></span></div>
<div class="ln" style="top:1179.20px"><span class="no">72</span><span class="tx">            <i class="ctrl">if </i><i class="blue">not </i><i class="var">key_str</i><i class="p">:</i></span></div>
<b class="g" style="left:90px;top:319px;height:123px;background:#2f2f2f"></b>
<b class="g" style="left:91px;top:319px;height:123px;background:#3c3c3c"></b>
<b class="g" style="left:90px;top:515px;height:468px;background:#2f2f2f"></b>
<b class="g" style="left:91px;top:515px;height:468px;background:#3c3c3c"></b>
<b class="g" style="left:90px;top:1056px;height:148px;background:#2f2f2f"></b>
<b class="g" style="left:91px;top:1056px;height:148px;background:#3c3c3c"></b>
<b class="g" style="left:130px;top:368px;height:24px;background:#404040"></b>
<b class="g" style="left:131px;top:368px;height:24px;background:#2b2b2b"></b>
<b class="g" style="left:130px;top:589px;height:123px;background:#404040"></b>
<b class="g" style="left:131px;top:589px;height:123px;background:#2b2b2b"></b>
<b class="g" style="left:130px;top:737px;height:221px;background:#404040"></b>
<b class="g" style="left:131px;top:737px;height:221px;background:#2b2b2b"></b>
<b class="g" style="left:130px;top:1130px;height:74px;background:#404040"></b>
<b class="g" style="left:131px;top:1130px;height:74px;background:#2b2b2b"></b>
<b class="g" style="left:169px;top:614px;height:98px;background:#313131"></b>
<b class="g" style="left:170px;top:614px;height:98px;background:#3b3b3b"></b>
<b class="g" style="left:169px;top:761px;height:197px;background:#313131"></b>
<b class="g" style="left:170px;top:761px;height:197px;background:#3b3b3b"></b>
<b class="g" style="left:169px;top:1155px;height:49px;background:#313131"></b>
<b class="g" style="left:170px;top:1155px;height:49px;background:#3b3b3b"></b>
<b class="g" style="left:208px;top:638px;height:25px;background:#212121"></b>
<b class="g" style="left:209px;top:638px;height:25px;background:#404040"></b>
<b class="g" style="left:210px;top:638px;height:25px;background:#292929"></b>
<b class="g" style="left:208px;top:687px;height:25px;background:#212121"></b>
<b class="g" style="left:209px;top:687px;height:25px;background:#404040"></b>
<b class="g" style="left:210px;top:687px;height:25px;background:#292929"></b>
<b class="g" style="left:208px;top:786px;height:24px;background:#212121"></b>
<b class="g" style="left:209px;top:786px;height:24px;background:#404040"></b>
<b class="g" style="left:210px;top:786px;height:24px;background:#292929"></b>
<b class="g" style="left:208px;top:884px;height:25px;background:#212121"></b>
<b class="g" style="left:209px;top:884px;height:25px;background:#404040"></b>
<b class="g" style="left:210px;top:884px;height:25px;background:#292929"></b>
<b class="g" style="left:208px;top:933px;height:25px;background:#212121"></b>
<b class="g" style="left:209px;top:933px;height:25px;background:#404040"></b>
<b class="g" style="left:210px;top:933px;height:25px;background:#292929"></b>
<div id="mmsh"></div>
<div id="mm"><div id="mmw"><div id="mmc"><div style="top:0.000px"><i class="s">"""Flask application exposing an interactive interface for the Katy Shift word cloud."""</i></div><div style="top:24.000px"><i class="ctrl">from </i><i class="typ">__future__ </i><i class="ctrl">import </i><i class="var">annotations</i></div><div style="top:64.000px"><i class="ctrl">import </i><i class="typ">json</i></div><div style="top:88.000px"><i class="ctrl">import </i><i class="typ">os</i></div><div style="top:112.000px"><i class="ctrl">import </i><i class="typ">time</i></div><div style="top:128.000px"><i class="ctrl">from </i><i class="typ">collections </i><i class="ctrl">import </i><i class="typ">Counter</i><i class="p">, </i><i class="typ">OrderedDict</i></div><div style="top:152.000px"><i class="ctrl">from </i><i class="typ">pathlib </i><i class="ctrl">import </i><i class="typ">Path</i></div><div style="top:176.000px"><i class="ctrl">from </i><i class="typ">typing </i><i class="ctrl">import </i><i class="typ">Any</i><i class="p">, </i><i class="typ">Dict</i><i class="p">, </i><i class="typ">Iterable</i><i class="p">, </i><i class="typ">Mapping</i><i class="p">, </i><i class="typ">Optional</i><i class="p">, </i><i class="typ">Sequence</i></div><div style="top:216.000px"><i class="ctrl">from </i><i class="typ">flask </i><i class="ctrl">import </i><i class="typ">Flask</i><i class="p">, </i><i class="var">jsonify</i><i class="p">, </i><i class="var">render_template</i><i class="p">, </i><i class="var">request</i></div><div style="top:240.000px"><i class="ctrl">from </i><i class="typ">werkzeug</i><i class="p">.</i><i class="typ">utils </i><i class="ctrl">import </i><i class="var">secure_filename</i></div><div style="top:288.000px"><i class="ctrl">from </i><i class="typ">wordcloud_core </i><i class="ctrl">import </i><i class="b0">(</i></div><div style="top:304.000px">    <i class="const">DEFAULT_PALETTE</i><i class="p">,</i></div><div style="top:328.000px">    <i class="const">DEFAULT_STOP_GROUPS</i><i class="p">,</i></div><div style="top:352.000px">    <i class="const">STOP_GROUPS</i><i class="p">,</i></div><div style="top:368.000px">    <i class="const">THEME_PRESETS</i><i class="p">,</i></div><div style="top:392.000px">    <i class="typ">WordCloudConfig</i><i class="p">,</i></div><div style="top:416.000px">    <i class="typ">WordCountStat</i><i class="p">,</i></div><div style="top:440.000px">    <i class="var">generate_words_and_stats_from_file</i><i class="p">,</i></div><div style="top:456.000px">    <i class="var">render_html</i><i class="p">,</i></div><div style="top:480.000px"><i class="b0">)</i></div><div style="top:528.000px"><i class="const">BASE_DIR </i><i class="p">= </i><i class="typ">Path</i><i class="b0">(</i><i class="var">__file__</i><i class="b0">)</i><i class="p">.</i><i class="fn">resolve</i><i class="b0">()</i><i class="p">.</i><i class="var">parent</i></div><div style="top:544.000px"><i class="const">UPLOAD_DIR </i><i class="p">= </i><i class="const">BASE_DIR </i><i class="p">/ </i><i class="s">"data" </i><i class="p">/ </i><i class="s">"uploads"</i></div><div style="top:568.000px"><i class="const">UPLOAD_DIR</i><i class="p">.</i><i class="fn">mkdir</i><i class="b0">(</i><i class="var">parents</i><i class="p">=</i><i class="blue">True</i><i class="p">, </i><i class="var">exist_ok</i><i class="p">=</i><i class="blue">True</i><i class="b0">)</i></div><div style="top:616.000px"><i class="var">app </i><i class="p">= </i><i class="typ">Flask</i><i class="b0">(</i><i class="var">__name__</i><i class="p">, </i><i class="var">static_folder</i><i class="p">=</i><i class="s">"static"</i><i class="p">, </i><i class="var">template_folder</i><i class="p">=</i><i class="s">"templates"</i><i class="b0">)</i></div><div style="top:656.000px"><i class="const">CACHE_ENABLED </i><i class="p">= </i><i class="typ">os</i><i class="p">.</i><i class="var">environ</i><i class="p">.</i><i class="fn">get</i><i class="b0">(</i><i class="s">"WORDCLOUD_CACHE"</i><i class="p">, </i><i class="s">"1"</i><i class="b0">)</i><i class="p">.</i><i class="fn">lower</i><i class="b0">() </i><i class="blue">not in </i><i class="b0">{</i><i class="s">"0"</i><i class="p">, </i><i class="s">"false"</i><i class="p">, </i><i class="s">"no"</i><i class="b0">}</i></div><div style="top:680.000px"><i class="const">CACHE_CAPACITY </i><i class="p">= </i><i class="fn">max</i><i class="b0">(</i><i class="n">1</i><i class="p">, </i><i class="typ">int</i><i class="b1">(</i><i class="typ">os</i><i class="p">.</i><i class="var">environ</i><i class="p">.</i><i class="fn">get</i><i class="b2">(</i><i class="s">"WORDCLOUD_CACHE_MAX"</i><i class="p">, </i><i class="s">"8"</i><i class="b2">) </i><i class="ctrl">or </i><i class="n">8</i><i class="b1">)</i><i class="b0">)</i></div><div style="top:696.000px"><i class="const">TOKEN_CACHE</i><i class="p">: </i><i class="typ">OrderedDict</i><i class="b0">[</i><i class="typ">tuple</i><i class="p">, </i><i class="typ">Dict</i><i class="b1">[</i><i class="typ">str</i><i class="p">, </i><i class="typ">object</i><i class="b1">]</i><i class="b0">] </i><i class="p">= </i><i class="typ">OrderedDict</i><i class="b0">()</i></div><div style="top:768.000px"><i class="blue">def </i><i class="fn">parse_stopword_groups</i><i class="b0">(</i><i class="var">payload</i><i class="p">: </i><i class="typ">Mapping</i><i class="b1">[</i><i class="typ">str</i><i class="p">, </i><i class="typ">Any</i><i class="b1">]</i><i class="b0">) </i><i class="p">−&gt; </i><i class="typ">Iterable</i><i class="b0">[</i><i class="typ">str</i><i class="b0">]</i><i class="p">:</i></div><div style="top:784.000px">    <i class="var">requested </i><i class="p">= </i><i class="var">payload</i><i class="p">.</i><i class="fn">get</i><i class="b0">(</i><i class="s">"stopwordGroups"</i><i class="b0">)</i></div><div style="top:808.000px">    <i class="ctrl">if </i><i class="var">requested </i><i class="blue">is None</i><i class="p">:</i></div><div style="top:832.000px">        <i class="ctrl">return </i><i class="const">DEFAULT_STOP_GROUPS</i></div><div style="top:856.000px">    <i class="var">allowed </i><i class="p">= </i><i class="typ">set</i><i class="b0">(</i><i class="const">STOP_GROUPS</i><i class="p">.</i><i class="fn">keys</i><i class="b1">()</i><i class="b0">)</i></div><div style="top:872.000px">    <i class="ctrl">return </i><i class="b0">[</i><i class="var">group </i><i class="ctrl">for </i><i class="var">group </i><i class="ctrl">in </i><i class="var">requested </i><i class="ctrl">if </i><i class="var">group </i><i class="blue">in </i><i class="var">allowed</i><i class="b0">]</i></div><div style="top:936.000px"><i class="blue">def </i><i class="fn">parse_boosts</i><i class="b0">(</i><i class="var">payload</i><i class="p">: </i><i class="typ">Mapping</i><i class="b1">[</i><i class="typ">str</i><i class="p">, </i><i class="typ">Any</i><i class="b1">]</i><i class="b0">) </i><i class="p">−&gt; </i><i class="typ">Dict</i><i class="b0">[</i><i class="typ">str</i><i class="p">, </i><i class="typ">float</i><i class="b0">]</i><i class="p">:</i></div><div style="top:960.000px">    <i class="var">boosts </i><i class="p">= </i><i class="var">payload</i><i class="p">.</i><i class="fn">get</i><i class="b0">(</i><i class="s">"boosts"</i><i class="p">, </i><i class="b1">{}</i><i class="b0">)</i></div><div style="top:984.000px">    <i class="var">parsed</i><i class="p">: </i><i class="typ">Dict</i><i class="b0">[</i><i class="typ">str</i><i class="p">, </i><i class="typ">float</i><i class="b0">] </i><i class="p">= </i><i class="b0">{}</i></div><div style="top:1008.000px">    <i class="ctrl">if </i><i class="fn">isinstance</i><i class="b0">(</i><i class="var">boosts</i><i class="p">, </i><i class="typ">Mapping</i><i class="b0">)</i><i class="p">:</i></div><div style="top:1024.000px">        <i class="ctrl">for </i><i class="var">key</i><i class="p">, </i><i class="var">value </i><i class="ctrl">in </i><i class="var">boosts</i><i class="p">.</i><i class="fn">items</i><i class="b0">()</i><i class="p">:</i></div><div style="top:1048.000px">            <i class="ctrl">try</i><i class="p">:</i></div><div style="top:1072.000px">                <i class="var">parsed</i><i class="b0">[</i><i class="typ">str</i><i class="b1">(</i><i class="var">key</i><i class="b1">)</i><i class="p">.</i><i class="fn">lower</i><i class="b1">()</i><i class="b0">] </i><i class="p">= </i><i class="typ">float</i><i class="b0">(</i><i class="var">value</i><i class="b0">)</i></div><div style="top:1096.000px">            <i class="ctrl">except </i><i class="b0">(</i><i class="typ">TypeError</i><i class="p">, </i><i class="typ">ValueError</i><i class="b0">)</i><i class="p">:</i></div><div style="top:1112.000px">                <i class="ctrl">continue</i></div><div style="top:1136.000px">    <i class="ctrl">elif </i><i class="fn">isinstance</i><i class="b0">(</i><i class="var">boosts</i><i class="p">, </i><i class="typ">Sequence</i><i class="b0">)</i><i class="p">:</i></div><div style="top:1160.000px">        <i class="ctrl">for </i><i class="var">item </i><i class="ctrl">in </i><i class="var">boosts</i><i class="p">:</i></div><div style="top:1184.000px">            <i class="ctrl">if </i><i class="blue">not </i><i class="fn">isinstance</i><i class="b0">(</i><i class="var">item</i><i class="p">, </i><i class="typ">Mapping</i><i class="b0">)</i><i class="p">:</i></div><div style="top:1200.000px">                <i class="ctrl">continue</i></div><div style="top:1224.000px">            <i class="var">phrase </i><i class="p">= </i><i class="typ">str</i><i class="b0">(</i><i class="var">item</i><i class="p">.</i><i class="fn">get</i><i class="b1">(</i><i class="s">"phrase"</i><i class="p">, </i><i class="s">""</i><i class="b1">)</i><i class="b0">)</i><i class="p">.</i><i class="fn">strip</i><i class="b0">()</i><i class="p">.</i><i class="fn">lower</i><i class="b0">()</i></div><div style="top:1248.000px">            <i class="var">factor </i><i class="p">= </i><i class="var">item</i><i class="p">.</i><i class="fn">get</i><i class="b0">(</i><i class="s">"factor"</i><i class="b0">)</i></div><div style="top:1264.000px">            <i class="ctrl">try</i><i class="p">:</i></div><div style="top:1288.000px">                <i class="var">parsed</i><i class="b0">[</i><i class="var">phrase</i><i class="b0">] </i><i class="p">= </i><i class="typ">float</i><i class="b0">(</i><i class="var">factor</i><i class="b0">)</i></div><div style="top:1312.000px">            <i class="ctrl">except </i><i class="b0">(</i><i class="typ">TypeError</i><i class="p">, </i><i class="typ">ValueError</i><i class="b0">)</i><i class="p">:</i></div><div style="top:1336.000px">                <i class="ctrl">continue</i></div><div style="top:1352.000px">    <i class="ctrl">return </i><i class="var">parsed</i></div><div style="top:1424.000px"><i class="blue">def </i><i class="fn">parse_manual_adjustments</i><i class="b0">(</i><i class="var">payload</i><i class="p">: </i><i class="typ">Mapping</i><i class="b1">[</i><i class="typ">str</i><i class="p">, </i><i class="typ">Any</i><i class="b1">]</i><i class="b0">) </i><i class="p">−&gt; </i><i class="typ">Dict</i><i class="b0">[</i><i class="typ">str</i><i class="p">, </i><i class="typ">float</i><i class="b0">]</i><i class="p">:</i></div><div style="top:1440.000px">    <i class="var">adjustments </i><i class="p">= </i><i class="var">payload</i><i class="p">.</i><i class="fn">get</i><i class="b0">(</i><i class="s">"manualAdjustments"</i><i class="p">, </i><i class="b1">{}</i><i class="b0">)</i></div><div style="top:1464.000px">    <i class="var">parsed</i><i class="p">: </i><i class="typ">Dict</i><i class="b0">[</i><i class="typ">str</i><i class="p">, </i><i class="typ">float</i><i class="b0">] </i><i class="p">= </i><i class="b0">{}</i></div><div style="top:1488.000px">    <i class="ctrl">if </i><i class="fn">isinstance</i><i class="b0">(</i><i class="var">adjustments</i><i class="p">, </i><i class="typ">Mapping</i><i class="b0">)</i><i class="p">:</i></div><div style="top:1512.000px">        <i class="ctrl">for </i><i class="var">key</i><i class="p">, </i><i class="var">value </i><i class="ctrl">in </i><i class="var">adjustments</i><i class="p">.</i><i class="fn">items</i><i class="b0">()</i><i class="p">:</i></div><div style="top:1528.000px">            <i class="var">key_str </i><i class="p">= </i><i class="typ">str</i><i class="b0">(</i><i class="var">key</i><i class="b0">)</i><i class="p">.</i><i class="fn">strip</i><i class="b0">()</i></div><div style="top:1552.000px">            <i class="ctrl">if </i><i class="blue">not </i><i class="var">key_str</i><i class="p">:</i></div><div style="top:1576.000px">                <i class="ctrl">continue</i></div><div style="top:1592.000px">            <i class="ctrl">try</i><i class="p">:</i></div><div style="top:1616.000px">                <i class="var">parsed</i><i class="b0">[</i><i class="var">key_str</i><i class="b0">] </i><i class="p">= </i><i class="typ">float</i><i class="b0">(</i><i class="var">value</i><i class="b0">)</i></div><div style="top:1640.000px">            <i class="ctrl">except </i><i class="b0">(</i><i class="typ">TypeError</i><i class="p">, </i><i class="typ">ValueError</i><i class="b0">)</i><i class="p">:</i></div><div style="top:1664.000px">                <i class="ctrl">continue</i></div><div style="top:1680.000px">    <i class="ctrl">elif </i><i class="fn">isinstance</i><i class="b0">(</i><i class="var">adjustments</i><i class="p">, </i><i class="typ">Sequence</i><i class="b0">)</i><i class="p">:</i></div><div style="top:1704.000px">        <i class="ctrl">for </i><i class="var">item </i><i class="ctrl">in </i><i class="var">adjustments</i><i class="p">:</i></div><div style="top:1728.000px">            <i class="ctrl">if </i><i class="blue">not </i><i class="fn">isinstance</i><i class="b0">(</i><i class="var">item</i><i class="p">, </i><i class="typ">Mapping</i><i class="b0">)</i><i class="p">:</i></div><div style="top:1752.000px">                <i class="ctrl">continue</i></div><div style="top:1768.000px">            <i class="var">key_str </i><i class="p">= </i><i class="typ">str</i><i class="b0">(</i><i class="var">item</i><i class="p">.</i><i class="fn">get</i><i class="b1">(</i><i class="s">"word"</i><i class="p">, </i><i class="s">""</i><i class="b1">)</i><i class="b0">)</i><i class="p">.</i><i class="fn">strip</i><i class="b0">()</i></div><div style="top:1792.000px">            <i class="ctrl">if </i><i class="blue">not </i><i class="var">key_str</i><i class="p">:</i></div><div style="top:1816.000px">                <i class="ctrl">continue</i></div><div style="top:1840.000px">            <i class="var">value </i><i class="p">= </i><i class="var">item</i><i class="p">.</i><i class="fn">get</i><i class="b0">(</i><i class="s">"adjustment"</i><i class="b0">)</i></div><div style="top:1856.000px">            <i class="ctrl">try</i><i class="p">:</i></div><div style="top:1880.000px">                <i class="var">parsed</i><i class="b0">[</i><i class="var">key_str</i><i class="b0">] </i><i class="p">= </i><i class="typ">float</i><i class="b0">(</i><i class="var">value</i><i class="b0">)</i></div><div style="top:1904.000px">            <i class="ctrl">except </i><i class="b0">(</i><i class="typ">TypeError</i><i class="p">, </i><i class="typ">ValueError</i><i class="b0">)</i><i class="p">:</i></div><div style="top:1920.000px">                <i class="ctrl">continue</i></div><div style="top:1944.000px">    <i class="ctrl">return </i><i class="var">parsed</i></div><div style="top:2008.000px"><i class="blue">def </i><i class="fn">build_config</i><i class="b0">(</i><i class="var">payload</i><i class="p">: </i><i class="typ">Mapping</i><i class="b1">[</i><i class="typ">str</i><i class="p">, </i><i class="typ">Any</i><i class="b1">]</i><i class="b0">) </i><i class="p">−&gt; </i><i class="typ">WordCloudConfig</i><i class="p">:</i></div><div style="top:2032.000px">    <i class="var">config </i><i class="p">= </i><i class="typ">WordCloudConfig</i><i class="b0">(</i></div><div style="top:2056.000px">        <i class="var">enabled_stop_groups</i><i class="p">=</i><i class="typ">set</i><i class="b1">(</i><i class="fn">parse_stopword_groups</i><i class="b2">(</i><i class="var">payload</i><i class="b2">)</i><i class="b1">)</i><i class="p">,</i></div><div style="top:2080.000px">        <i class="var">extra_stopwords</i><i class="p">=</i><i class="b1">{</i><i class="typ">str</i><i class="b2">(</i><i class="var">word</i><i class="b2">)</i><i class="p">.</i><i class="fn">lower</i><i class="b2">() </i><i class="ctrl">for </i><i class="var">word </i><i class="ctrl">in </i><i class="var">payload</i><i class="p">.</i><i class="fn">get</i><i class="b2">(</i><i class="s">"extraStopwords"</i><i class="p">, </i><i class="b0">[]</i><i class="b2">)</i><i class="b1">}</i><i class="p">,</i></div><div style="top:2096.000px">        <i class="var">remove_stopwords</i><i class="p">=</i><i class="b1">{</i><i class="typ">str</i><i class="b2">(</i><i class="var">word</i><i class="b2">)</i><i class="p">.</i><i class="fn">lower</i><i class="b2">() </i><i class="ctrl">for </i><i class="var">word </i><i class="ctrl">in </i><i class="var">payload</i><i class="p">.</i><i class="fn">get</i><i class="b2">(</i><i class="s">"removeStopwords"</i><i class="p">, </i><i class="b0">[]</i><i class="b2">)</i><i class="b1">}</i><i class="p">,</i></div><div style="top:2120.000px">        <i class="var">keep_short_extras</i><i class="p">=</i><i class="b1">{</i><i class="typ">str</i><i class="b2">(</i><i class="var">word</i><i class="b2">)</i><i class="p">.</i><i class="fn">lower</i><i class="b2">() </i><i class="ctrl">for </i><i class="var">word </i><i class="ctrl">in </i><i class="var">payload</i><i class="p">.</i><i class="fn">get</i><i class="b2">(</i><i class="s">"keepShort"</i><i class="p">, </i><i class="b0">[]</i><i class="b2">)</i><i class="b1">}</i><i class="p">,</i></div><div style="top:2144.000px">        <i class="var">max_items</i><i class="p">=</i><i class="typ">int</i><i class="b1">(</i><i class="var">payload</i><i class="p">.</i><i class="fn">get</i><i class="b2">(</i><i class="s">"maxItems"</i><i class="p">, </i><i class="n">150</i><i class="b2">)</i><i class="b1">)</i><i class="p">,</i></div><div style="top:2160.000px">        <i class="var">max_font_size</i><i class="p">=</i><i class="typ">int</i><i class="b1">(</i><i class="var">payload</i><i class="p">.</i><i class="fn">get</i><i class="b2">(</i><i class="s">"maxFont"</i><i class="p">, </i><i class="n">100</i><i class="b2">)</i><i class="b1">)</i><i class="p">,</i></div><div style="top:2184.000px">        <i class="var">min_font_size</i><i class="p">=</i><i class="typ">int</i><i class="b1">(</i><i class="var">payload</i><i class="p">.</i><i class="fn">get</i><i class="b2">(</i><i class="s">"minFont"</i><i class="p">, </i><i class="n">8</i><i class="b2">)</i><i class="b1">)</i><i class="p">,</i></div><div style="top:2208.000px">        <i class="var">code_words_boost</i><i class="p">=</i><i class="typ">float</i><i class="b1">(</i><i class="var">payload</i><i class="p">.</i><i class="fn">get</i><i class="b2">(</i><i class="s">"codeBoost"</i><i class="p">, </i><i class="n">0.75</i><i class="b2">)</i><i class="b1">)</i><i class="p">,</i></div><div style="top:2232.000px">        <i class="var">reference_weight</i><i class="p">=</i><i class="typ">int</i><i class="b1">(</i><i class="var">payload</i><i class="p">.</i><i class="fn">get</i><i class="b2">(</i><i class="s">"referenceWeight"</i><i class="p">, </i><i class="n">0</i><i class="b2">)</i><i class="b1">)</i><i class="p">,</i></div><div style="top:2248.000px">        <i class="var">collect_all_json_strings</i><i class="p">=</i><i class="typ">bool</i><i class="b1">(</i><i class="var">payload</i><i class="p">.</i><i class="fn">get</i><i class="b2">(</i><i class="s">"collectAllJsonStrings"</i><i class="p">, </i><i class="blue">False</i><i class="b2">)</i><i class="b1">)</i><i class="p">,</i></div><div style="top:2272.000px">        <i class="var">detect_references</i><i class="p">=</i><i class="typ">bool</i><i class="b1">(</i><i class="var">payload</i><i class="p">.</i><i class="fn">get</i><i class="b2">(</i><i class="s">"detectReferences"</i><i class="p">, </i><i class="blue">True</i><i class="b2">)</i><i class="b1">)</i><i class="p">,</i></div><div style="top:2296.000px">    <i class="b0">)</i></div><div style="top:2336.000px">    <i class="var">boosts </i><i class="p">= </i><i class="fn">parse_boosts</i><i class="b0">(</i><i class="var">payload</i><i class="b0">)</i></div><div style="top:2360.000px">    <i class="ctrl">if </i><i class="var">boosts</i><i class="p">:</i></div><div style="top:2384.000px">        <i class="var">config</i><i class="p">.</i><i class="var">boost_map</i><i class="p">.</i><i class="fn">update</i><i class="b0">(</i><i class="var">boosts</i><i class="b0">)</i></div><div style="top:2424.000px">    <i class="var">json_keys </i><i class="p">= </i><i class="var">payload</i><i class="p">.</i><i class="fn">get</i><i class="b0">(</i><i class="s">"jsonKeys"</i><i class="b0">)</i></div><div style="top:2448.000px">    <i class="ctrl">if </i><i class="fn">isinstance</i><i class="b0">(</i><i class="var">json_keys</i><i class="p">, </i><i class="b1">(</i><i class="typ">list</i><i class="p">, </i><i class="typ">tuple</i><i class="p">, </i><i class="typ">set</i><i class="b1">)</i><i class="b0">)</i><i class="p">:</i></div><div style="top:2472.000px">        <i class="var">config</i><i class="p">.</i><i class="var">json_text_keys </i><i class="p">= </i><i class="b0">[</i><i class="typ">str</i><i class="b1">(</i><i class="var">key</i><i class="b1">)</i><i class="p">.</i><i class="fn">lower</i><i class="b1">() </i><i class="ctrl">for </i><i class="var">key </i><i class="ctrl">in </i><i class="var">json_keys </i><i class="ctrl">if </i><i class="typ">str</i><i class="b1">(</i><i class="var">key</i><i class="b1">)</i><i class="p">.</i><i class="fn">strip</i><i class="b1">()</i><i class="b0">]</i></div><div style="top:2488.000px">    <i class="ctrl">elif </i><i class="fn">isinstance</i><i class="b0">(</i><i class="var">json_keys</i><i class="p">, </i><i class="typ">str</i><i class="b0">) </i><i class="ctrl">and </i><i class="var">json_keys</i><i class="p">.</i><i class="fn">strip</i><i class="b0">()</i><i class="p">:</i></div><div style="top:2512.000px">        <i class="var">config</i><i class="p">.</i><i class="var">json_text_keys </i><i class="p">= </i><i class="b0">[</i><i class="var">segment</i><i class="p">.</i><i class="fn">strip</i><i class="b1">()</i><i class="p">.</i><i class="fn">lower</i><i class="b1">() </i><i class="ctrl">for </i><i class="var">segment </i><i class="ctrl">in </i><i class="var">json_keys</i><i class="p">.</i><i class="fn">split</i><i class="b1">(</i><i class="s">","</i><i class="b1">) </i><i class="ctrl">if </i><i class="var">segment</i><i class="p">.</i><i class="fn">strip</i><i class="b1">()</i><i class="b0">]</i></div><div style="top:2560.000px">    <i class="var">manual_adjustments </i><i class="p">= </i><i class="fn">parse_manual_adjustments</i><i class="b0">(</i><i class="var">payload</i><i class="b0">)</i></div><div style="top:2576.000px">    <i class="ctrl">if </i><i class="var">manual_adjustments</i><i class="p">:</i></div><div style="top:2600.000px">        <i class="var">config</i><i class="p">.</i><i class="var">manual_weight_adjustments </i><i class="p">= </i><i class="var">manual_adjustments</i></div><div style="top:2624.000px">    <i class="ctrl">return </i><i class="var">config</i></div><div style="top:2688.000px"><i class="blue">def </i><i class="fn">build_token_cache_key</i><i class="b0">(</i><i class="var">path</i><i class="p">: </i><i class="typ">Path</i><i class="p">, </i><i class="var">file_type</i><i class="p">: </i><i class="typ">str</i><i class="p">, </i><i class="var">config</i><i class="p">: </i><i class="typ">WordCloudConfig</i><i class="b0">) </i><i class="p">−&gt; </i><i class="typ">tuple</i><i class="p">:</i></div><div style="top:2712.000px">    <i class="var">stat </i><i class="p">= </i><i class="var">path</i><i class="p">.</i><i class="fn">stat</i><i class="b0">()</i></div><div style="top:2736.000px">    <i class="var">stopwords_key </i><i class="p">= </i><i class="typ">tuple</i><i class="b0">(</i><i class="fn">sorted</i><i class="b1">(</i><i class="var">config</i><i class="p">.</i><i class="fn">stopwords</i><i class="b2">()</i><i class="b1">)</i><i class="b0">)</i></div><div style="top:2752.000px">    <i class="var">keep_key </i><i class="p">= </i><i class="typ">tuple</i><i class="b0">(</i><i class="fn">sorted</i><i class="b1">(</i><i class="var">config</i><i class="p">.</i><i class="var">keep_short</i><i class="b1">)</i><i class="b0">)</i></div><div style="top:2776.000px">    <i class="var">json_keys </i><i class="p">= </i><i class="typ">tuple</i><i class="b0">(</i><i class="fn">sorted</i><i class="b1">(</i><i class="var">config</i><i class="p">.</i><i class="var">json_text_keys</i><i class="b1">)</i><i class="b0">) </i><i class="ctrl">if </i><i class="var">config</i><i class="p">.</i><i class="var">json_text_keys </i><i class="ctrl">else </i><i class="b0">()</i></div><div style="top:2800.000px">    <i class="ctrl">return </i><i class="b0">(</i></div><div style="top:2816.000px">        <i class="typ">str</i><i class="b1">(</i><i class="var">path</i><i class="b1">)</i><i class="p">,</i></div><div style="top:2840.000px">        <i class="var">file_type</i><i class="p">,</i></div><div style="top:2864.000px">        <i class="typ">int</i><i class="b1">(</i><i class="var">stat</i><i class="p">.</i><i class="var">st_mtime_ns</i><i class="b1">)</i><i class="p">,</i></div><div style="top:2888.000px">        <i class="var">stopwords_key</i><i class="p">,</i></div><div style="top:2904.000px">        <i class="var">keep_key</i><i class="p">,</i></div><div style="top:2928.000px">        <i class="var">config</i><i class="p">.</i><i class="var">min_token_length</i><i class="p">,</i></div><div style="top:2952.000px">        <i class="var">config</i><i class="p">.</i><i class="var">collect_all_json_strings</i><i class="p">,</i></div><div style="top:2976.000px">        <i class="var">json_keys</i><i class="p">,</i></div><div style="top:2992.000px">        <i class="var">config</i><i class="p">.</i><i class="var">detect_references</i><i class="p">,</i></div><div style="top:3016.000px">    <i class="b0">)</i></div><div style="top:3080.000px"><i class="blue">def </i><i class="fn">get_cached_prepared</i><i class="b0">(</i></div><div style="top:3104.000px">    <i class="var">path</i><i class="p">: </i><i class="typ">Path</i><i class="p">, </i><i class="var">file_type</i><i class="p">: </i><i class="typ">str</i><i class="p">, </i><i class="var">config</i><i class="p">: </i><i class="typ">WordCloudConfig</i></div><div style="top:3128.000px"><i class="b0">) </i><i class="p">−&gt; </i><i class="typ">tuple</i><i class="b0">[</i><i class="typ">Optional</i><i class="b1">[</i><i class="typ">tuple</i><i class="b1">]</i><i class="p">, </i><i class="typ">Optional</i><i class="b1">[</i><i class="typ">Dict</i><i class="b2">[</i><i class="typ">str</i><i class="p">, </i><i class="typ">object</i><i class="b2">]</i><i class="b1">]</i><i class="b0">]</i><i class="p">:</i></div><div style="top:3144.000px">    <i class="ctrl">if </i><i class="blue">not </i><i class="const">CACHE_ENABLED</i><i class="p">:</i></div><div style="top:3168.000px">        <i class="ctrl">return </i><i class="blue">None</i><i class="p">, </i><i class="blue">None</i></div><div style="top:3192.000px">    <i class="ctrl">try</i><i class="p">:</i></div><div style="top:3216.000px">        <i class="var">key </i><i class="p">= </i><i class="fn">build_token_cache_key</i><i class="b0">(</i><i class="var">path</i><i class="p">, </i><i class="var">file_type</i><i class="p">, </i><i class="var">config</i><i class="b0">)</i></div><div style="top:3232.000px">    <i class="ctrl">except </i><i class="typ">OSError</i><i class="p">:</i></div><div style="top:3256.000px">        <i class="ctrl">return </i><i class="blue">None</i><i class="p">, </i><i class="blue">None</i></div><div style="top:3280.000px">    <i class="var">entry </i><i class="p">= </i><i class="const">TOKEN_CACHE</i><i class="p">.</i><i class="fn">get</i><i class="b0">(</i><i class="var">key</i><i class="b0">)</i></div><div style="top:3304.000px">    <i class="ctrl">if </i><i class="var">entry </i><i class="blue">is not None</i><i class="p">:</i></div><div style="top:3320.000px">        <i class="const">TOKEN_CACHE</i><i class="p">.</i><i class="fn">move_to_end</i><i class="b0">(</i><i class="var">key</i><i class="b0">)</i></div><div style="top:3344.000px">        <i class="ctrl">return </i><i class="var">key</i><i class="p">, </i><i class="var">entry</i></div><div style="top:3368.000px">    <i class="ctrl">return </i><i class="var">key</i><i class="p">, </i><i class="blue">None</i></div><div style="top:3432.000px"><i class="blue">def </i><i class="fn">store_cache_entry</i><i class="b0">(</i><i class="var">cache_key</i><i class="p">: </i><i class="typ">Optional</i><i class="b1">[</i><i class="typ">tuple</i><i class="b1">]</i><i class="p">, </i><i class="var">entry</i><i class="p">: </i><i class="typ">Dict</i><i class="b1">[</i><i class="typ">str</i><i class="p">, </i><i class="typ">object</i><i class="b1">]</i><i class="b0">) </i><i class="p">−&gt; </i><i class="blue">None</i><i class="p">:</i></div><div style="top:3456.000px">    <i class="ctrl">if </i><i class="blue">not </i><i class="const">CACHE_ENABLED </i><i class="ctrl">or </i><i class="var">cache_key </i><i class="blue">is None</i><i class="p">:</i></div><div style="top:3472.000px">        <i class="ctrl">return</i></div><div style="top:3496.000px">    <i class="ctrl">if </i><i class="s">"tokens" </i><i class="blue">not in </i><i class="var">entry </i><i class="ctrl">or </i><i class="s">"references" </i><i class="blue">not in </i><i class="var">entry</i><i class="p">:</i></div><div style="top:3520.000px">        <i class="ctrl">return</i></div><div style="top:3544.000px">    <i class="const">TOKEN_CACHE</i><i class="b0">[</i><i class="var">cache_key</i><i class="b0">] </i><i class="p">= </i><i class="var">entry</i></div><div style="top:3560.000px">    <i class="const">TOKEN_CACHE</i><i class="p">.</i><i class="fn">move_to_end</i><i class="b0">(</i><i class="var">cache_key</i><i class="b0">)</i></div><div style="top:3584.000px">    <i class="ctrl">while </i><i class="fn">len</i><i class="b0">(</i><i class="const">TOKEN_CACHE</i><i class="b0">) </i><i class="p">&gt; </i><i class="const">CACHE_CAPACITY</i><i class="p">:</i></div><div style="top:3608.000px">        <i class="const">TOKEN_CACHE</i><i class="p">.</i><i class="fn">popitem</i><i class="b0">(</i><i class="var">last</i><i class="p">=</i><i class="blue">False</i><i class="b0">)</i></div><div style="top:3672.000px"><i class="blue">def </i><i class="fn">build_analysis_payload</i><i class="b0">(</i></div><div style="top:3696.000px">    <i class="var">stats</i><i class="p">: </i><i class="typ">Dict</i><i class="b1">[</i><i class="typ">str</i><i class="p">, </i><i class="typ">WordCountStat</i><i class="b1">]</i><i class="p">,</i></div><div style="top:3712.000px">    <i class="var">final_counts</i><i class="p">: </i><i class="typ">Dict</i><i class="b1">[</i><i class="typ">str</i><i class="p">, </i><i class="typ">int</i><i class="b1">]</i><i class="p">,</i></div><div style="top:3736.000px">    <i class="var">references</i><i class="p">: </i><i class="typ">Iterable</i><i class="b1">[</i><i class="typ">str</i><i class="b1">]</i><i class="p">,</i></div><div style="top:3760.000px"><i class="b0">) </i><i class="p">−&gt; </i><i class="typ">Dict</i><i class="b0">[</i><i class="typ">str</i><i class="p">, </i><i class="typ">Any</i><i class="b0">]</i><i class="p">:</i></div><div style="top:3784.000px">    <i class="var">sorted_stats </i><i class="p">= </i><i class="fn">sorted</i><i class="b0">(</i><i class="var">stats</i><i class="p">.</i><i class="fn">values</i><i class="b1">()</i><i class="p">, </i><i class="var">key</i><i class="p">=</i><i class="blue">lambda </i><i class="var">stat</i><i class="p">: </i><i class="var">stat</i><i class="p">.</i><i class="var">final_count</i><i class="p">, </i><i class="var">reverse</i><i class="p">=</i><i class="blue">True</i><i class="b0">)</i></div><div style="top:3800.000px">    <i class="var">words_payload </i><i class="p">= </i><i class="b0">[</i></div><div style="top:3824.000px">        <i class="b1">{</i></div><div style="top:3848.000px">            <i class="s">"text"</i><i class="p">: </i><i class="var">stat</i><i class="p">.</i><i class="var">key</i><i class="p">,</i></div><div style="top:3872.000px">            <i class="s">"baseCount"</i><i class="p">: </i><i class="var">stat</i><i class="p">.</i><i class="var">base_count</i><i class="p">,</i></div><div style="top:3888.000px">            <i class="s">"referenceBonus"</i><i class="p">: </i><i class="var">stat</i><i class="p">.</i><i class="var">reference_bonus</i><i class="p">,</i></div><div style="top:3912.000px">            <i class="s">"bigramCount"</i><i class="p">: </i><i class="var">stat</i><i class="p">.</i><i class="var">bigram_count</i><i class="p">,</i></div><div style="top:3936.000px">            <i class="s">"boostMultiplier"</i><i class="p">: </i><i class="var">stat</i><i class="p">.</i><i class="var">boost_multiplier</i><i class="p">,</i></div><div style="top:3960.000px">            <i class="s">"manualAdjustment"</i><i class="p">: </i><i class="var">stat</i><i class="p">.</i><i class="var">manual_adjustment</i><i class="p">,</i></div><div style="top:3976.000px">            <i class="s">"finalCount"</i><i class="p">: </i><i class="var">stat</i><i class="p">.</i><i class="var">final_count</i><i class="p">,</i></div><div style="top:4000.000px">        <i class="b1">}</i></div><div style="top:4024.000px">        <i class="ctrl">for </i><i class="var">stat </i><i class="ctrl">in </i><i class="var">sorted_stats</i></div><div style="top:4040.000px">    <i class="b0">]</i></div><div style="top:4088.000px">    <i class="var">total_tokens </i><i class="p">= </i><i class="fn">sum</i><i class="b0">(</i><i class="var">stat</i><i class="p">.</i><i class="var">base_count </i><i class="ctrl">for </i><i class="var">stat </i><i class="ctrl">in </i><i class="var">stats</i><i class="p">.</i><i class="fn">values</i><i class="b1">()</i><i class="b0">)</i></div><div style="top:4112.000px">    <i class="var">final_total </i><i class="p">= </i><i class="fn">sum</i><i class="b0">(</i><i class="var">final_counts</i><i class="p">.</i><i class="fn">values</i><i class="b1">()</i><i class="b0">)</i></div><div style="top:4128.000px">    <i class="var">reference_counter </i><i class="p">= </i><i class="typ">Counter</i><i class="b0">(</i><i class="var">references</i><i class="b0">)</i></div><div style="top:4176.000px">    <i class="ctrl">return </i><i class="b0">{</i></div><div style="top:4200.000px">        <i class="s">"totalTokens"</i><i class="p">: </i><i class="typ">int</i><i class="b1">(</i><i class="var">total_tokens</i><i class="b1">)</i><i class="p">,</i></div><div style="top:4216.000px">        <i class="s">"totalFinal"</i><i class="p">: </i><i class="typ">int</i><i class="b1">(</i><i class="var">final_total</i><i class="b1">)</i><i class="p">,</i></div><div style="top:4240.000px">        <i class="s">"uniqueTokens"</i><i class="p">: </i><i class="fn">len</i><i class="b1">(</i><i class="var">stats</i><i class="b1">)</i><i class="p">,</i></div><div style="top:4264.000px">        <i class="s">"referenceMentions"</i><i class="p">: </i><i class="fn">sum</i><i class="b1">(</i><i class="var">reference_counter</i><i class="p">.</i><i class="fn">values</i><i class="b2">()</i><i class="b1">)</i><i class="p">,</i></div><div style="top:4288.000px">        <i class="s">"referenceCounts"</i><i class="p">: </i><i class="typ">dict</i><i class="b1">(</i><i class="var">reference_counter</i><i class="b1">)</i><i class="p">,</i></div><div style="top:4304.000px">        <i class="s">"words"</i><i class="p">: </i><i class="var">words_payload</i><i class="p">,</i></div><div style="top:4328.000px">    <i class="b0">}</i></div><div style="top:4392.000px"><i class="blue">def </i><i class="fn">resolve_input_path</i><i class="b0">(</i><i class="var">path_str</i><i class="p">: </i><i class="typ">str</i><i class="b0">) </i><i class="p">−&gt; </i><i class="typ">Path</i><i class="p">:</i></div><div style="top:4416.000px">    <i class="var">candidate </i><i class="p">= </i><i class="b0">(</i><i class="const">BASE_DIR </i><i class="p">/ </i><i class="var">path_str</i><i class="b0">)</i><i class="p">.</i><i class="fn">resolve</i><i class="b0">() </i><i class="ctrl">if </i><i class="blue">not </i><i class="typ">Path</i><i class="b0">(</i><i class="var">path_str</i><i class="b0">)</i><i class="p">.</i><i class="fn">is_absolute</i><i class="b0">() </i><i class="ctrl">else </i><i class="typ">Path</i><i class="b0">(</i><i class="var">path_str</i><i class="b0">)</i><i class="p">.</i><i class="fn">resolve</i><i class="b0">()</i></div><div style="top:4440.000px">    <i class="ctrl">if </i><i class="const">BASE_DIR </i><i class="blue">not in </i><i class="var">candidate</i><i class="p">.</i><i class="var">parents </i><i class="ctrl">and </i><i class="var">candidate </i><i class="p">!= </i><i class="const">BASE_DIR</i><i class="p">:</i></div><div style="top:4456.000px">        <i class="ctrl">raise </i><i class="typ">ValueError</i><i class="b0">(</i><i class="s">"Input path must stay within the project directory"</i><i class="b0">)</i></div><div style="top:4480.000px">    <i class="ctrl">if </i><i class="blue">not </i><i class="var">candidate</i><i class="p">.</i><i class="fn">exists</i><i class="b0">()</i><i class="p">:</i></div><div style="top:4504.000px">        <i class="ctrl">raise </i><i class="typ">FileNotFoundError</i><i class="b0">(</i><i class="var">candidate</i><i class="b0">)</i></div><div style="top:4528.000px">    <i class="ctrl">return </i><i class="var">candidate</i></div><div style="top:4592.000px"><i class="fn">@app.get</i><i class="b0">(</i><i class="s">"/"</i><i class="b0">)</i></div><div style="top:4608.000px"><i class="blue">def </i><i class="fn">index</i><i class="b0">() </i><i class="p">−&gt; </i><i class="typ">str</i><i class="p">:</i></div><div style="top:4632.000px">    <i class="ctrl">return </i><i class="fn">render_template</i><i class="b0">(</i></div><div style="top:4656.000px">        <i class="s">"index.html"</i><i class="p">,</i></div><div style="top:4680.000px">        <i class="var">stop_groups</i><i class="p">=</i><i class="typ">list</i><i class="b1">(</i><i class="const">STOP_GROUPS</i><i class="p">.</i><i class="fn">keys</i><i class="b2">()</i><i class="b1">)</i><i class="p">,</i></div><div style="top:4696.000px">        <i class="var">default_palette</i><i class="p">=</i><i class="const">DEFAULT_PALETTE</i><i class="p">,</i></div><div style="top:4720.000px">        <i class="var">default_font</i><i class="p">=</i><i class="s">"Inter, ui-sans-serif, system-ui, -apple-system, Segoe UI, Roboto, Helvetica, Arial"</i><i class="p">,</i></div><div style="top:4744.000px">        <i class="var">theme_presets</i><i class="p">=</i><i class="const">THEME_PRESETS</i><i class="p">,</i></div><div style="top:4768.000px">    <i class="b0">)</i></div><div style="top:4832.000px"><i class="fn">@app.post</i><i class="b0">(</i><i class="s">"/api/upload"</i><i class="b0">)</i></div><div style="top:4856.000px"><i class="blue">def </i><i class="fn">upload</i><i class="b0">() </i><i class="p">−&gt; </i><i class="typ">Any</i><i class="p">:</i></div><div style="top:4872.000px">    <i class="ctrl">if </i><i class="s">"file" </i><i class="blue">not in </i><i class="var">request</i><i class="p">.</i><i class="var">files</i><i class="p">:</i></div><div style="top:4896.000px">        <i class="ctrl">return </i><i class="fn">jsonify</i><i class="b0">(</i><i class="b1">{</i><i class="s">"error"</i><i class="p">: </i><i class="s">"No file part"</i><i class="b1">}</i><i class="b0">)</i><i class="p">, </i><i class="n">400</i></div><div style="top:4920.000px">    <i class="var">file </i><i class="p">= </i><i class="var">request</i><i class="p">.</i><i class="var">files</i><i class="b0">[</i><i class="s">"file"</i><i class="b0">]</i></div><div style="top:4936.000px">    <i class="ctrl">if </i><i class="blue">not </i><i class="var">file </i><i class="ctrl">or </i><i class="var">file</i><i class="p">.</i><i class="var">filename </i><i class="p">== </i><i class="s">""</i><i class="p">:</i></div><div style="top:4960.000px">        <i class="ctrl">return </i><i class="fn">jsonify</i><i class="b0">(</i><i class="b1">{</i><i class="s">"error"</i><i class="p">: </i><i class="s">"No selected file"</i><i class="b1">}</i><i class="b0">)</i><i class="p">, </i><i class="n">400</i></div><div style="top:5008.000px">    <i class="var">filename </i><i class="p">= </i><i class="fn">secure_filename</i><i class="b0">(</i><i class="var">file</i><i class="p">.</i><i class="var">filename</i><i class="b0">) </i><i class="ctrl">or </i><i class="blue">f</i><i class="s">"upload-{int(time.time())}.json"</i></div><div style="top:5024.000px">    <i class="var">timestamp </i><i class="p">= </i><i class="typ">int</i><i class="b0">(</i><i class="typ">time</i><i class="p">.</i><i class="typ">time</i><i class="b1">()</i><i class="b0">)</i></div><div style="top:5048.000px">    <i class="var">stored_name </i><i class="p">= </i><i class="blue">f</i><i class="s">"{timestamp}_{filename}"</i></div><div style="top:5072.000px">    <i class="var">destination </i><i class="p">= </i><i class="const">UPLOAD_DIR </i><i class="p">/ </i><i class="var">stored_name</i></div><div style="top:5096.000px">    <i class="var">file</i><i class="p">.</i><i class="fn">save</i><i class="b0">(</i><i class="var">destination</i><i class="b0">)</i></div><div style="top:5136.000px">    <i class="var">relative_path </i><i class="p">= </i><i class="var">destination</i><i class="p">.</i><i class="fn">relative_to</i><i class="b0">(</i><i class="const">BASE_DIR</i><i class="b0">)</i></div><div style="top:5160.000px">    <i class="ctrl">return </i><i class="fn">jsonify</i><i class="b0">(</i><i class="b1">{</i></div><div style="top:5184.000px">        <i class="s">"jsonPath"</i><i class="p">: </i><i class="typ">str</i><i class="b2">(</i><i class="var">relative_path</i><i class="b2">)</i><i class="p">,</i></div><div style="top:5200.000px">        <i class="s">"filename"</i><i class="p">: </i><i class="var">filename</i><i class="p">,</i></div><div style="top:5224.000px">        <i class="s">"stored"</i><i class="p">: </i><i class="typ">str</i><i class="b2">(</i><i class="var">destination</i><i class="b2">)</i><i class="p">,</i></div><div style="top:5248.000px">    <i class="b1">}</i><i class="b0">)</i></div><div style="top:5312.000px"><i class="fn">@app.post</i><i class="b0">(</i><i class="s">"/api/generate"</i><i class="b0">)</i></div><div style="top:5336.000px"><i class="blue">def </i><i class="fn">generate</i><i class="b0">() </i><i class="p">−&gt; </i><i class="typ">Any</i><i class="p">:</i></div><div style="top:5352.000px">    <i class="ctrl">if </i><i class="var">request</i><i class="p">.</i><i class="var">mimetype </i><i class="p">== </i><i class="s">"application/json"</i><i class="p">:</i></div><div style="top:5376.000px">        <i class="var">payload </i><i class="p">= </i><i class="var">request</i><i class="p">.</i><i class="fn">get_json</i><i class="b0">(</i><i class="var">silent</i><i class="p">=</i><i class="blue">True</i><i class="b0">) </i><i class="ctrl">or </i><i class="b0">{}</i></div><div style="top:5400.000px">        <i class="var">supplementary_form </i><i class="p">= </i><i class="b0">{}</i></div><div style="top:5424.000px">    <i class="ctrl">else</i><i class="p">:</i></div><div style="top:5440.000px">        <i class="var">payload </i><i class="p">= </i><i class="b0">{}</i></div><div style="top:5464.000px">        <i class="var">supplementary_form </i><i class="p">= </i><i class="var">request</i><i class="p">.</i><i class="var">form</i><i class="p">.</i><i class="fn">to_dict</i><i class="b0">(</i><i class="var">flat</i><i class="p">=</i><i class="blue">True</i><i class="b0">)</i></div><div style="top:5488.000px">        <i class="ctrl">if </i><i class="s">"config" </i><i class="blue">in </i><i class="var">supplementary_form</i><i class="p">:</i></div><div style="top:5512.000px">            <i class="ctrl">try</i><i class="p">:</i></div><div style="top:5528.000px">                <i class="var">payload </i><i class="p">= </i><i class="typ">json</i><i class="p">.</i><i class="fn">loads</i><i class="b0">(</i><i class="var">supplementary_form</i><i class="b1">[</i><i class="s">"config"</i><i class="b1">]</i><i class="b0">)</i></div><div style="top:5552.000px">            <i class="ctrl">except </i><i class="typ">json</i><i class="p">.</i><i class="typ">JSONDecodeError</i><i class="p">:</i></div><div style="top:5576.000px">                <i class="var">payload </i><i class="p">= </i><i class="b0">{}</i></div><div style="top:5616.000px">    <i class="var">json_path </i><i class="p">= </i><i class="var">payload</i><i class="p">.</i><i class="fn">get</i><i class="b0">(</i><i class="s">"jsonPath"</i><i class="b0">) </i><i class="ctrl">or </i><i class="var">supplementary_form</i><i class="p">.</i><i class="fn">get</i><i class="b0">(</i><i class="s">"jsonPath"</i><i class="b0">)</i></div><div style="top:5640.000px">    <i class="ctrl">if </i><i class="blue">not </i><i class="var">json_path</i><i class="p">:</i></div><div style="top:5664.000px">        <i class="ctrl">return </i><i class="fn">jsonify</i><i class="b0">(</i><i class="b1">{</i><i class="s">"error"</i><i class="p">: </i><i class="s">"jsonPath missing"</i><i class="b1">}</i><i class="b0">)</i><i class="p">, </i><i class="n">400</i></div><div style="top:5704.000px">    <i class="ctrl">try</i><i class="p">:</i></div><div style="top:5728.000px">        <i class="var">path </i><i class="p">= </i><i class="fn">resolve_input_path</i><i class="b0">(</i><i class="var">json_path</i><i class="b0">)</i></div><div style="top:5752.000px">    <i class="ctrl">except </i><i class="typ">FileNotFoundError</i><i class="p">:</i></div><div style="top:5768.000px">        <i class="ctrl">return </i><i class="fn">jsonify</i><i class="b0">(</i><i class="b1">{</i><i class="s">"error"</i><i class="p">: </i><i class="blue">f</i><i class="s">"Input file not found: {json_path}"</i><i class="b1">}</i><i class="b0">)</i><i class="p">, </i><i class="n">404</i></div><div style="top:5792.000px">    <i class="ctrl">except </i><i class="typ">ValueError </i><i class="ctrl">as </i><i class="var">exc</i><i class="p">:</i></div><div style="top:5816.000px">        <i class="ctrl">return </i><i class="fn">jsonify</i><i class="b0">(</i><i class="b1">{</i><i class="s">"error"</i><i class="p">: </i><i class="typ">str</i><i class="b2">(</i><i class="var">exc</i><i class="b2">)</i><i class="b1">}</i><i class="b0">)</i><i class="p">, </i><i class="n">400</i></div><div style="top:5856.000px">    <i class="var">config </i><i class="p">= </i><i class="fn">build_config</i><i class="b0">(</i><i class="var">payload</i><i class="b0">)</i></div><div style="top:5880.000px">    <i class="var">file_type </i><i class="p">= </i><i class="typ">str</i><i class="b0">(</i><i class="var">payload</i><i class="p">.</i><i class="fn">get</i><i class="b1">(</i><i class="s">"fileType"</i><i class="p">, </i><i class="s">"auto"</i><i class="b1">)</i><i class="b0">)</i><i class="p">.</i><i class="fn">lower</i><i class="b0">()</i></div><div style="top:5904.000px">    <i class="ctrl">if </i><i class="var">file_type </i><i class="blue">not in </i><i class="b0">{</i><i class="s">"auto"</i><i class="p">, </i><i class="s">"json"</i><i class="p">, </i><i class="s">"text"</i><i class="b0">}</i><i class="p">:</i></div><div style="top:5920.000px">        <i class="var">file_type </i><i class="p">= </i><i class="s">"auto"</i></div><div style="top:5944.000px">    <i class="ctrl">if </i><i class="var">file_type </i><i class="p">== </i><i class="s">"auto"</i><i class="p">:</i></div><div style="top:5968.000px">        <i class="var">file_type </i><i class="p">= </i><i class="blue">None</i></div><div style="top:6008.000px">    <i class="var">resolved_kind </i><i class="p">= </i><i class="var">file_type </i><i class="ctrl">or </i><i class="b0">(</i><i class="s">"json" </i><i class="ctrl">if </i><i class="var">path</i><i class="p">.</i><i class="var">suffix</i><i class="p">.</i><i class="fn">lower</i><i class="b1">() </i><i class="p">== </i><i class="s">".json" </i><i class="ctrl">else </i><i class="s">"text"</i><i class="b0">)</i></div><div style="top:6056.000px">    <i class="var">skip_cache </i><i class="p">= </i><i class="typ">bool</i><i class="b0">(</i><i class="var">payload</i><i class="p">.</i><i class="fn">get</i><i class="b1">(</i><i class="s">"skipCache"</i><i class="b1">)</i><i class="b0">)</i></div><div style="top:6080.000px">    <i class="var">use_cache </i><i class="p">= </i><i class="const">CACHE_ENABLED </i><i class="ctrl">and </i><i class="blue">not </i><i class="var">skip_cache</i></div><div style="top:6096.000px">    <i class="var">cache_key</i><i class="p">: </i><i class="typ">Optional</i><i class="b0">[</i><i class="typ">tuple</i><i class="b0">] </i><i class="p">= </i><i class="blue">None</i></div><div style="top:6120.000px">    <i class="var">prepared_entry</i><i class="p">: </i><i class="typ">Optional</i><i class="b0">[</i><i class="typ">Dict</i><i class="b1">[</i><i class="typ">str</i><i class="p">, </i><i class="typ">object</i><i class="b1">]</i><i class="b0">] </i><i class="p">= </i><i class="blue">None</i></div><div style="top:6160.000px">    <i class="ctrl">if </i><i class="var">use_cache</i><i class="p">:</i></div><div style="top:6184.000px">        <i class="var">cache_key</i><i class="p">, </i><i class="var">prepared_entry </i><i class="p">= </i><i class="fn">get_cached_prepared</i><i class="b0">(</i><i class="var">path</i><i class="p">, </i><i class="var">resolved_kind</i><i class="p">, </i><i class="var">config</i><i class="b0">)</i></div><div style="top:6232.000px">    <i class="ctrl">if </i><i class="var">prepared_entry </i><i class="blue">is None </i><i class="ctrl">and </i><i class="var">use_cache</i><i class="p">:</i></div><div style="top:6248.000px">        <i class="var">prepared_entry </i><i class="p">= </i><i class="b0">{}</i></div><div style="top:6296.000px">    <i class="var">words</i><i class="p">, </i><i class="var">stats</i><i class="p">, </i><i class="var">raw_counts</i><i class="p">, </i><i class="var">references </i><i class="p">= </i><i class="fn">generate_words_and_stats_from_file</i><i class="b0">(</i></div><div style="top:6320.000px">        <i class="var">path</i><i class="p">,</i></div><div style="top:6336.000px">        <i class="var">config</i><i class="p">=</i><i class="var">config</i><i class="p">,</i></div><div style="top:6360.000px">        <i class="var">file_type</i><i class="p">=</i><i class="var">file_type</i><i class="p">,</i></div><div style="top:6384.000px">        <i class="var">prepared</i><i class="p">=</i><i class="var">prepared_entry </i><i class="ctrl">if </i><i class="var">use_cache </i><i class="ctrl">else </i><i class="blue">None</i><i class="p">,</i></div><div style="top:6408.000px">    <i class="b0">)</i></div><div style="top:6448.000px">    <i class="ctrl">if </i><i class="var">use_cache </i><i class="ctrl">and </i><i class="var">prepared_entry </i><i class="blue">is not None</i><i class="p">:</i></div><div style="top:6472.000px">        <i class="fn">store_cache_entry</i><i class="b0">(</i><i class="var">cache_key</i><i class="p">, </i><i class="var">prepared_entry</i><i class="b0">)</i></div><div style="top:6512.000px">    <i class="var">analysis </i><i class="p">= </i><i class="fn">build_analysis_payload</i><i class="b0">(</i><i class="var">stats</i><i class="p">, </i><i class="var">raw_counts</i><i class="p">, </i><i class="var">references</i><i class="b0">)</i></div><div style="top:6560.000px">    <i class="ctrl">if </i><i class="var">payload</i><i class="p">.</i><i class="fn">get</i><i class="b0">(</i><i class="s">"analysisOnly"</i><i class="b0">)</i><i class="p">:</i></div><div style="top:6576.000px">        <i class="ctrl">return </i><i class="fn">jsonify</i><i class="b0">(</i><i class="b1">{</i><i class="s">"analysis"</i><i class="p">: </i><i class="var">analysis</i><i class="b1">}</i><i class="b0">)</i></div><div style="top:6624.000px">    <i class="ctrl">if </i><i class="var">payload</i><i class="p">.</i><i class="fn">get</i><i class="b0">(</i><i class="s">"returnHtml"</i><i class="b0">)</i><i class="p">:</i></div><div style="top:6648.000px">        <i class="var">html </i><i class="p">= </i><i class="fn">render_html</i><i class="b0">(</i></div><div style="top:6664.000px">            <i class="var">words</i><i class="p">,</i></div><div style="top:6688.000px">            <i class="var">palette</i><i class="p">=</i><i class="var">payload</i><i class="p">.</i><i class="fn">get</i><i class="b1">(</i><i class="s">"palette"</i><i class="p">, </i><i class="const">DEFAULT_PALETTE</i><i class="b1">)</i><i class="p">,</i></div><div style="top:6712.000px">            <i class="var">width</i><i class="p">=</i><i class="typ">int</i><i class="b1">(</i><i class="var">payload</i><i class="p">.</i><i class="fn">get</i><i class="b2">(</i><i class="s">"width"</i><i class="p">, </i><i class="n">1024</i><i class="b2">)</i><i class="b1">)</i><i class="p">,</i></div><div style="top:6736.000px">            <i class="var">height</i><i class="p">=</i><i class="typ">int</i><i class="b1">(</i><i class="var">payload</i><i class="p">.</i><i class="fn">get</i><i class="b2">(</i><i class="s">"height"</i><i class="p">, </i><i class="n">1000</i><i class="b2">)</i><i class="b1">)</i><i class="p">,</i></div><div style="top:6752.000px">            <i class="var">title</i><i class="p">=</i><i class="var">payload</i><i class="p">.</i><i class="fn">get</i><i class="b1">(</i><i class="s">"title"</i><i class="p">, </i><i class="s">"Katy Shift &amp; Portfolio Word Cloud (Rated)"</i><i class="b1">)</i><i class="p">,</i></div><div style="top:6776.000px">            <i class="var">heading</i><i class="p">=</i><i class="var">payload</i><i class="p">.</i><i class="fn">get</i><i class="b1">(</i><i class="s">"heading"</i><i class="b1">)</i><i class="p">,</i></div><div style="top:6800.000px">            <i class="var">font_family</i><i class="p">=</i><i class="var">payload</i><i class="p">.</i><i class="fn">get</i><i class="b1">(</i><i class="s">"fontFamily"</i><i class="p">, </i><i class="s">"Inter, ui-sans-serif, system-ui, -apple-system, Segoe UI, Roboto, Helvetica, Arial"</i><i class="b1">)</i><i class="p">,</i></div><div style="top:6816.000px">        <i class="b0">)</i></div><div style="top:6840.000px">        <i class="ctrl">return </i><i class="fn">jsonify</i><i class="b0">(</i><i class="b1">{</i><i class="s">"words"</i><i class="p">: </i><i class="var">words</i><i class="p">, </i><i class="s">"html"</i><i class="p">: </i><i class="var">html</i><i class="p">, </i><i class="s">"analysis"</i><i class="p">: </i><i class="var">analysis</i><i class="b1">}</i><i class="b0">)</i></div><div style="top:6888.000px">    <i class="ctrl">return </i><i class="fn">jsonify</i><i class="b0">(</i><i class="b1">{</i><i class="s">"words"</i><i class="p">: </i><i class="var">words</i><i class="p">, </i><i class="s">"analysis"</i><i class="p">: </i><i class="var">analysis</i><i class="b1">}</i><i class="b0">)</i></div><div style="top:6952.000px"><i class="ctrl">if </i><i class="var">__name__ </i><i class="p">== </i><i class="s">"__main__"</i><i class="p">:</i></div><div style="top:6976.000px">    <i class="var">app</i><i class="p">.</i><i class="fn">run</i><i class="b0">(</i><i class="var">debug</i><i class="p">=</i><i class="blue">True</i><i class="b0">)</i></div></div></div></div>
<div id="sb"></div><div id="sbm"></div>
</div>
</body></html>
